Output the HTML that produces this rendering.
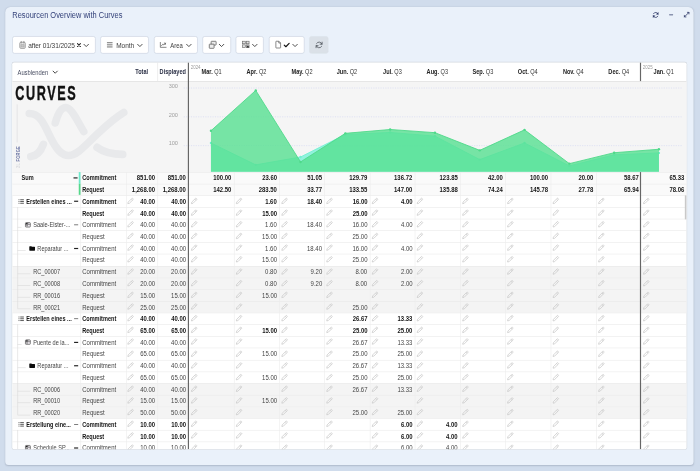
<!DOCTYPE html><html><head><meta charset="utf-8"><title>Resourcen Overview with Curves</title><style>
*{box-sizing:border-box;margin:0;padding:0}
html,body{width:700px;height:471px;overflow:hidden;background:#d0dcec}
body{font-family:"Liberation Sans",sans-serif;color:#222}
#root{position:absolute;left:0;top:0;width:1200px;height:808px;transform:scale(.583333);transform-origin:0 0;filter:blur(.45px)}
.abs{position:absolute}
.panel{position:absolute;background:#eaf1fa;border-radius:9px 9px 6px 6px;box-shadow:0 1.5px 2.5px rgba(60,70,90,.22)}
.title{position:absolute;font-size:14.6px;color:#34427a;white-space:nowrap;line-height:16px;transform:scaleX(.875);transform-origin:0 0}
.btn{position:absolute;background:#fff;border:1px solid #c6cfdc;border-radius:4px}
.btn.grey{background:#dbe1e8;border-color:#dbe1e8}
.bt{position:absolute;font-size:11.2px;letter-spacing:-.1px;color:#3c3c3c;white-space:nowrap;line-height:14px}
.grid{position:absolute;background:#fff;border-radius:3px;overflow:hidden;box-shadow:0 0 0 1px #d3d8df}
.hl{position:absolute;left:0;right:0;height:1px;background:#e9e9e9}
.vl{position:absolute;width:1px;background:#ececec}
.t{position:absolute;font-size:12px;line-height:14px;white-space:nowrap;color:#333;transform:scaleX(.83);transform-origin:0 0}
.t.n{transform:scaleX(.855)}
.t.rr{transform-origin:100% 0}
.t.nm{transform:scaleX(.8)}
.t.ty{transform:scaleX(.855)}
.t.b.ty{transform:scaleX(.795)}
.b{font-weight:700;color:#151515}
.t.b{transform:scaleX(.795)}
.t.b.n{transform:scaleX(.85)}
.r{text-align:right}
.hd{position:absolute;font-size:12px;line-height:14px;transform:scaleX(.8);white-space:nowrap;color:#333;text-align:center}
.hd b{font-weight:700;color:#222}
.yr{position:absolute;font-size:8.4px;line-height:8px;color:#9a9a9a;transform:scaleX(.9);transform-origin:0 0}
.row{position:absolute;left:0;right:0}
svg{position:absolute;overflow:visible}
</style></head><body><div id="root">
<div class="panel" style="left:8.57px;top:11.83px;width:1180.80px;height:784.97px"></div>
<div class="title" style="left:21.43px;top:17.57px">Resourcen Overview with Curves</div>
<svg style="left:1117.71px;top:19.54px" width="12.00" height="11.31" viewBox="0 0 16 15" fill="none" stroke="#2b3665" stroke-width="1.7" stroke-linecap="round" stroke-linejoin="round"><path d="M13.4 5.8A5.7 5.7 0 0 0 3 4.6M2.6 9.2A5.7 5.7 0 0 0 13 10.4"/><path d="M13.8 1.6v4.2h-4.2M2.2 13.4V9.2h4.2" fill="#2b3665" stroke-width="1"/></svg>
<div class="abs" style="left:1146.51px;top:24.51px;width:7.37px;height:1.46px;background:#2b3665;border-radius:1px"></div>
<svg style="left:1171.89px;top:20.23px" width="10.29" height="10.29" viewBox="0 0 12 12" fill="none" stroke="#2b3665" stroke-width="1.6" stroke-linecap="round" stroke-linejoin="round"><path d="M1.6 10.4L10.4 1.6"/><path d="M7.4 1.4h3.2v3.2M4.6 10.6H1.4V7.4" stroke-width="1.5"/></svg>
<div class="btn " style="left:21.43px;top:62.40px;width:142.11px;height:29.49px"></div>
<svg style="left:32.91px;top:70.29px" width="11.31" height="14.06" viewBox="0 0 14 17" fill="none" stroke="#808080" stroke-width="1.5" stroke-linejoin="round"><rect x="1.2" y="2.8" width="11.6" height="13" rx="2.2" fill="#ececec"/><path d="M4.2 .9v3.6M9.8 .9v3.6" stroke-linecap="round"/><rect x="3.6" y="7.4" width="6.8" height="5.6" fill="#c6c6c6" stroke="#9a9a9a" stroke-width="1"/></svg>
<div class="bt" style="left:48.34px;top:70.54px">after 01/31/2025</div>
<svg style="left:132.00px;top:73.89px" width="6.69" height="6.69" viewBox="0 0 8 8" fill="none" stroke="#1a1a1a" stroke-width="2.1" stroke-linecap="round"><path d="M1 1l6 6M7 1L1 7"/></svg>
<svg style="left:143.31px;top:75.09px" width="9.60" height="5.83" viewBox="0 0 10 6" fill="none" stroke="#3a3a3a" stroke-width="1.6" stroke-linecap="round" stroke-linejoin="round"><path d="M1 1l4 4 4-4"/></svg>
<div class="btn " style="left:172.46px;top:62.40px;width:82.29px;height:29.49px"></div>
<svg style="left:183.09px;top:72.34px" width="10.29" height="9.60" viewBox="0 0 12 11" fill="none" stroke="#6a6a6a" stroke-width="1.9"><path d="M.4 1.4h11.2M.4 5.6h11.2M.4 9.8h11.2"/></svg>
<div class="bt" style="left:199.20px;top:70.54px">Month</div>
<svg style="left:235.20px;top:75.09px" width="9.60" height="5.83" viewBox="0 0 10 6" fill="none" stroke="#3a3a3a" stroke-width="1.6" stroke-linecap="round" stroke-linejoin="round"><path d="M1 1l4 4 4-4"/></svg>
<div class="btn " style="left:263.66px;top:62.40px;width:74.91px;height:29.49px"></div>
<svg style="left:274.29px;top:72.00px" width="11.31" height="9.94" viewBox="0 0 13 11.5" fill="none" stroke="#555" stroke-width="1.4" stroke-linecap="round" stroke-linejoin="round"><path d="M1 .8v9.8h11.4"/><path d="M3.4 7.2l2.6-3 2 1.8 3-3.6"/><path d="M8.8 2.2h2.4v2.4"/></svg>
<div class="bt" style="left:292.11px;top:70.54px;transform:scaleX(0.91);transform-origin:0 0">Area</div>
<svg style="left:319.20px;top:75.09px" width="9.60" height="5.83" viewBox="0 0 10 6" fill="none" stroke="#3a3a3a" stroke-width="1.6" stroke-linecap="round" stroke-linejoin="round"><path d="M1 1l4 4 4-4"/></svg>
<div class="btn " style="left:346.97px;top:62.40px;width:48.69px;height:29.49px"></div>
<svg style="left:357.77px;top:69.94px" width="13.37" height="13.71" viewBox="0 0 15.6 16" fill="#ececec" stroke="#5a5a5a" stroke-width="1.5" stroke-linejoin="round"><rect x="4.6" y=".9" width="10" height="7.6" rx="1"/><rect x=".9" y="6.6" width="9.6" height="8.4" rx="1"/></svg>
<svg style="left:375.26px;top:75.09px" width="9.60" height="5.83" viewBox="0 0 10 6" fill="none" stroke="#3a3a3a" stroke-width="1.6" stroke-linecap="round" stroke-linejoin="round"><path d="M1 1l4 4 4-4"/></svg>
<div class="btn " style="left:404.23px;top:62.40px;width:48.00px;height:29.49px"></div>
<svg style="left:414.86px;top:70.46px" width="13.03" height="12.00" viewBox="0 0 15.2 14" fill="#e2e2e2" stroke="#6a6a6a" stroke-width="1.3"><rect x=".8" y=".8" width="5.6" height="5"/><rect x="8.4" y=".8" width="5.6" height="5"/><rect x=".8" y="8" width="5.6" height="5"/><rect x="8.4" y="8" width="5.6" height="5"/><path d="M8.6 13.4l3-4.6 3 4.6z" fill="#222" stroke="none"/></svg>
<svg style="left:432.34px;top:75.09px" width="9.60" height="5.83" viewBox="0 0 10 6" fill="none" stroke="#3a3a3a" stroke-width="1.6" stroke-linecap="round" stroke-linejoin="round"><path d="M1 1l4 4 4-4"/></svg>
<div class="btn " style="left:460.80px;top:62.40px;width:61.03px;height:29.49px"></div>
<svg style="left:471.77px;top:70.29px" width="9.94" height="13.03" viewBox="0 0 11 14.4" fill="none" stroke="#555" stroke-width="1.3" stroke-linejoin="round"><path d="M1 1.6a.8.8 0 0 1 .8-.8h5L10 4v8.8a.8.8 0 0 1-.8.8H1.8a.8.8 0 0 1-.8-.8z"/><path d="M6.6 1v3.2H10"/></svg>
<svg style="left:486.00px;top:73.03px" width="10.97" height="8.23" viewBox="0 0 12 9" fill="none" stroke="#111" stroke-width="2.2" stroke-linecap="round" stroke-linejoin="round"><path d="M1.4 4.8l3 3 6.2-6.4"/></svg>
<svg style="left:501.43px;top:75.09px" width="9.60" height="5.83" viewBox="0 0 10 6" fill="none" stroke="#3a3a3a" stroke-width="1.6" stroke-linecap="round" stroke-linejoin="round"><path d="M1 1l4 4 4-4"/></svg>
<div class="btn grey" style="left:529.71px;top:62.40px;width:33.60px;height:29.49px"></div>
<svg style="left:539.66px;top:70.29px" width="14.06" height="14.06" viewBox="0 0 16 16" fill="none" stroke="#4a5058" stroke-width="1.5" stroke-linecap="round" stroke-linejoin="round"><path d="M13.6 6.6A5.9 5.9 0 0 0 3 5.2M2.4 9.4A5.9 5.9 0 0 0 13 10.8"/><path d="M13.9 2.6v4h-4M2.1 13.4v-4h4"/></svg>
<div class="grid" style="left:21.43px;top:106.97px;width:1155.43px;height:663.09px">
<div class="abs" style="left:0;right:0;top:32.06px;height:155.49px;background:#f5f5f5"></div>
<div class="hl" style="top:32.06px;background:#dcdcdc"></div>
<div class="t" style="left:8.40px;top:10.01px;color:#4a4f63">Ausblenden</div>
<svg style="left:68.74px;top:14.40px" width="9.26" height="5.49" viewBox="0 0 10 6" fill="none" stroke="#333" stroke-width="1.7" stroke-linecap="round" stroke-linejoin="round"><path d="M1 1l4 4 4-4"/></svg>
<div class="t b rr" style="right:922.97px;top:9.33px;color:#2a2f45">Total</div>
<div class="t b rr" style="right:857.66px;top:9.33px;color:#2a2f45">Displayed</div>
<div class="vl" style="left:248.23px;top:0;height:32.06px;background:#e2e2e2"></div>
<div class="hd" style="left:302.40px;width:77.52px;top:9.33px"><b>Mar.</b> Q1</div>
<div class="hd" style="left:379.92px;width:77.52px;top:9.33px"><b>Apr.</b> Q2</div>
<div class="hd" style="left:457.44px;width:77.52px;top:9.33px"><b>May.</b> Q2</div>
<div class="hd" style="left:534.96px;width:77.52px;top:9.33px"><b>Jun.</b> Q2</div>
<div class="hd" style="left:612.48px;width:77.52px;top:9.33px"><b>Jul.</b> Q3</div>
<div class="hd" style="left:690.00px;width:77.52px;top:9.33px"><b>Aug.</b> Q3</div>
<div class="hd" style="left:767.52px;width:77.52px;top:9.33px"><b>Sep.</b> Q3</div>
<div class="hd" style="left:845.04px;width:77.52px;top:9.33px"><b>Oct.</b> Q4</div>
<div class="hd" style="left:922.56px;width:77.52px;top:9.33px"><b>Nov.</b> Q4</div>
<div class="hd" style="left:1000.08px;width:77.52px;top:9.33px"><b>Dec.</b> Q4</div>
<div class="hd" style="left:1077.60px;width:77.52px;top:9.33px"><b>Jan.</b> Q1</div>
<div class="yr" style="left:306.00px;top:4.11px">2024</div>
<div class="yr" style="left:1080.86px;top:4.11px">2025</div>
<div class="abs" style="left:4.63px;top:34.29px;font-size:34.8px;line-height:36px;font-weight:700;color:#111;-webkit-text-stroke:.7px #111;letter-spacing:4.4px;transform:scaleX(.625);transform-origin:0 0;white-space:nowrap">CURVES</div>
<svg style="left:0.00px;top:32.06px" width="240.00px" height="154.97px" viewBox="12.5 81.1 140 90.4" fill="none" stroke="#e8e9eb" stroke-width="7.6" stroke-linecap="round"><path d="M29.5 113.5 C41 113.5 45 126 51 138 C57 150 62 155.5 69 155.5 C77 155.5 85 146 97 134.5 C107 125 115 118 124 112.5"/><path d="M55.5 123 C58 114 61 107.5 66 107.5 C72 107.5 78 122 84 131.5"/><path d="M31 156.6 C36.5 156 41 151.5 43.6 144.4"/><path d="M97.3 147.4 C103 151.6 111 154.4 123 154.4"/><path d="M17.4 104.5V142.5" stroke-width=".7" stroke="#dcdde0" stroke-linecap="butt"/></svg>
<div class="abs" style="left:4.29px;top:169.54px;font-size:10.6px;line-height:8px;font-weight:700;color:#6670a0;letter-spacing:.6px;transform:rotate(-90deg) scaleX(.66);transform-origin:0 0;white-space:nowrap">FORGE</div>
<div class="abs" style="left:4.29px;top:181.03px;font-size:10.6px;line-height:8px;font-weight:700;color:#d8dade;letter-spacing:.3px;transform:rotate(-90deg) scaleX(.66);transform-origin:0 0;white-space:nowrap">2L</div>
<svg style="left:0;top:0" width="1155.43px" height="663.09px" viewBox="12.5 62.4 674.0 386.8">
<line x1="184" x2="682.5" y1="88.0" y2="88.0" stroke="#d2d7f3" stroke-width=".65" stroke-dasharray="1.1 1.3"/>
<text x="178.2" y="88.1" text-anchor="end" font-size="5.6" fill="#a0a0a0" font-family="Liberation Sans, sans-serif">300</text>
<line x1="184" x2="682.5" y1="116.8" y2="116.8" stroke="#d2d7f3" stroke-width=".65" stroke-dasharray="1.1 1.3"/>
<text x="178.2" y="116.8" text-anchor="end" font-size="5.6" fill="#a0a0a0" font-family="Liberation Sans, sans-serif">200</text>
<line x1="184" x2="682.5" y1="145.6" y2="145.6" stroke="#d2d7f3" stroke-width=".65" stroke-dasharray="1.1 1.3"/>
<text x="178.2" y="145.15" text-anchor="end" font-size="5.6" fill="#a0a0a0" font-family="Liberation Sans, sans-serif">100</text>
<polygon points="211.20,171.80 211.20,142.95 256.00,164.84 300.80,156.97 345.60,134.42 390.40,132.43 435.20,136.12 480.00,159.57 524.80,142.95 569.60,165.87 614.40,154.79 659.20,152.88 659.20,171.80" fill="#6ff0d4" fill-opacity=".75"/>
<polyline points="211.20,142.95 256.00,164.84 300.80,156.97 345.60,134.42 390.40,132.43 435.20,136.12 480.00,159.57 524.80,142.95 569.60,165.87 614.40,154.79 659.20,152.88" fill="none" stroke="#74f0d2" stroke-width=".9"/>
<circle cx="211.20" cy="142.95" r="1.2" fill="#74f0d2"/>
<circle cx="256.00" cy="164.84" r="1.2" fill="#74f0d2"/>
<circle cx="300.80" cy="156.97" r="1.2" fill="#74f0d2"/>
<circle cx="345.60" cy="134.42" r="1.2" fill="#74f0d2"/>
<circle cx="390.40" cy="132.43" r="1.2" fill="#74f0d2"/>
<circle cx="435.20" cy="136.12" r="1.2" fill="#74f0d2"/>
<circle cx="480.00" cy="159.57" r="1.2" fill="#74f0d2"/>
<circle cx="524.80" cy="142.95" r="1.2" fill="#74f0d2"/>
<circle cx="569.60" cy="165.87" r="1.2" fill="#74f0d2"/>
<circle cx="614.40" cy="154.79" r="1.2" fill="#74f0d2"/>
<circle cx="659.20" cy="152.88" r="1.2" fill="#74f0d2"/>
<polygon points="211.20,171.80 211.20,130.77 256.00,90.38 300.80,161.92 345.60,133.34 390.40,129.48 435.20,132.67 480.00,150.33 524.80,129.83 569.60,163.64 614.40,152.71 659.20,149.24 659.20,171.80" fill="#56e091" fill-opacity=".8"/>
<polyline points="211.20,130.77 256.00,90.38 300.80,161.92 345.60,133.34 390.40,129.48 435.20,132.67 480.00,150.33 524.80,129.83 569.60,163.64 614.40,152.71 659.20,149.24" fill="none" stroke="#4fd98a" stroke-width=".9" stroke-linejoin="round"/>
<circle cx="211.20" cy="130.77" r="1.2" fill="#4fd98a"/>
<circle cx="256.00" cy="90.38" r="1.2" fill="#4fd98a"/>
<circle cx="300.80" cy="161.92" r="1.2" fill="#4fd98a"/>
<circle cx="345.60" cy="133.34" r="1.2" fill="#4fd98a"/>
<circle cx="390.40" cy="129.48" r="1.2" fill="#4fd98a"/>
<circle cx="435.20" cy="132.67" r="1.2" fill="#4fd98a"/>
<circle cx="480.00" cy="150.33" r="1.2" fill="#4fd98a"/>
<circle cx="524.80" cy="129.83" r="1.2" fill="#4fd98a"/>
<circle cx="569.60" cy="163.64" r="1.2" fill="#4fd98a"/>
<circle cx="614.40" cy="152.71" r="1.2" fill="#4fd98a"/>
<circle cx="659.20" cy="149.24" r="1.2" fill="#4fd98a"/>
</svg>
<div class="abs" style="left:0;right:0;top:187.54px;height:20.21px;background:#fafafa"></div>
<div class="abs" style="left:0;right:0;top:207.67px;height:20.21px;background:#fafafa"></div>
<div class="abs" style="left:0;right:0;top:348.58px;height:20.21px;background:#f4f4f4"></div>
<div class="abs" style="left:0;right:0;top:368.71px;height:20.21px;background:#f4f4f4"></div>
<div class="abs" style="left:0;right:0;top:388.83px;height:20.21px;background:#f4f4f4"></div>
<div class="abs" style="left:0;right:0;top:408.96px;height:20.21px;background:#f4f4f4"></div>
<div class="abs" style="left:0;right:0;top:549.87px;height:20.21px;background:#f4f4f4"></div>
<div class="abs" style="left:0;right:0;top:570.00px;height:20.21px;background:#f4f4f4"></div>
<div class="abs" style="left:0;right:0;top:590.13px;height:20.21px;background:#f4f4f4"></div>
<div class="hl" style="top:187.54px"></div>
<div class="hl" style="top:207.67px"></div>
<div class="hl" style="top:227.80px"></div>
<div class="hl" style="top:247.93px"></div>
<div class="hl" style="top:268.06px"></div>
<div class="hl" style="top:288.19px"></div>
<div class="hl" style="top:308.32px"></div>
<div class="hl" style="top:328.45px"></div>
<div class="hl" style="top:348.58px"></div>
<div class="hl" style="top:368.71px"></div>
<div class="hl" style="top:388.83px"></div>
<div class="hl" style="top:408.96px"></div>
<div class="hl" style="top:429.09px"></div>
<div class="hl" style="top:449.22px"></div>
<div class="hl" style="top:469.35px"></div>
<div class="hl" style="top:489.48px"></div>
<div class="hl" style="top:509.61px"></div>
<div class="hl" style="top:529.74px"></div>
<div class="hl" style="top:549.87px"></div>
<div class="hl" style="top:570.00px"></div>
<div class="hl" style="top:590.13px"></div>
<div class="hl" style="top:610.25px"></div>
<div class="hl" style="top:630.38px"></div>
<div class="hl" style="top:650.51px"></div>
<div class="hl" style="top:670.64px"></div>
<div class="vl" style="left:116.91px;top:187.54px;height:475.54px"></div>
<div class="vl" style="left:194.40px;top:187.54px;height:475.54px"></div>
<div class="vl" style="left:248.23px;top:187.54px;height:475.54px"></div>
<div class="vl" style="left:379.92px;top:187.54px;height:475.54px"></div>
<div class="vl" style="left:457.44px;top:187.54px;height:475.54px"></div>
<div class="vl" style="left:534.96px;top:187.54px;height:475.54px"></div>
<div class="vl" style="left:612.48px;top:187.54px;height:475.54px"></div>
<div class="vl" style="left:690.00px;top:187.54px;height:475.54px"></div>
<div class="vl" style="left:767.52px;top:187.54px;height:475.54px"></div>
<div class="vl" style="left:845.04px;top:187.54px;height:475.54px"></div>
<div class="vl" style="left:922.56px;top:187.54px;height:475.54px"></div>
<div class="vl" style="left:1000.08px;top:187.54px;height:475.54px"></div>
<div class="abs" style="left:8.57px;top:247.93px;width:1px;height:174.53px;background:#d9d9d9"></div>
<div class="abs" style="left:8.57px;top:449.22px;width:1px;height:154.40px;background:#d9d9d9"></div>
<div class="abs" style="left:8.57px;top:630.38px;width:1px;height:32.70px;background:#d9d9d9"></div>
<div class="abs" style="left:8.57px;top:281.55px;width:7.20px;height:1px;background:#d9d9d9"></div>
<div class="abs" style="left:8.57px;top:321.81px;width:13.89px;height:1px;background:#d9d9d9"></div>
<div class="abs" style="left:8.57px;top:362.07px;width:22.46px;height:1px;background:#d9d9d9"></div>
<div class="abs" style="left:8.57px;top:382.20px;width:22.46px;height:1px;background:#d9d9d9"></div>
<div class="abs" style="left:8.57px;top:402.33px;width:22.46px;height:1px;background:#d9d9d9"></div>
<div class="abs" style="left:8.57px;top:422.46px;width:22.46px;height:1px;background:#d9d9d9"></div>
<div class="abs" style="left:8.57px;top:482.84px;width:7.20px;height:1px;background:#d9d9d9"></div>
<div class="abs" style="left:8.57px;top:523.10px;width:13.89px;height:1px;background:#d9d9d9"></div>
<div class="abs" style="left:8.57px;top:563.36px;width:22.46px;height:1px;background:#d9d9d9"></div>
<div class="abs" style="left:8.57px;top:583.49px;width:22.46px;height:1px;background:#d9d9d9"></div>
<div class="abs" style="left:8.57px;top:603.62px;width:22.46px;height:1px;background:#d9d9d9"></div>
<div class="abs" style="left:8.57px;top:664.01px;width:7.20px;height:1px;background:#d9d9d9"></div>
<div class="t b" style="top:191.25px;left:15.60px;">Sum</div>
<div class="abs" style="left:104.40px;top:197.26px;width:7.54px;height:1.54px;background:#222"></div>
<div class="abs" style="left:114.00px;top:188.23px;width:2.91px;height:19.44px;background:#6eeacb"></div>
<div class="t ty b" style="top:191.25px;left:120.00px;">Commitment</div>
<div class="t b n rr" style="top:191.25px;right:910.97px;">851.00</div>
<div class="t b n rr" style="top:191.25px;right:857.66px;">851.00</div>
<div class="t b n rr" style="top:191.25px;right:779.79px;">100.00</div>
<div class="t b n rr" style="top:191.25px;right:702.27px;">23.60</div>
<div class="t b n rr" style="top:191.25px;right:624.75px;">51.05</div>
<div class="t b n rr" style="top:191.25px;right:547.23px;">129.79</div>
<div class="t b n rr" style="top:191.25px;right:469.71px;">136.72</div>
<div class="t b n rr" style="top:191.25px;right:392.19px;">123.85</div>
<div class="t b n rr" style="top:191.25px;right:314.67px;">42.00</div>
<div class="t b n rr" style="top:191.25px;right:237.15px;">100.00</div>
<div class="t b n rr" style="top:191.25px;right:159.63px;">20.00</div>
<div class="t b n rr" style="top:191.25px;right:82.11px;">58.67</div>
<div class="t b n rr" style="top:191.25px;right:3.91px;">65.33</div>
<div class="abs" style="left:114.00px;top:207.67px;width:2.91px;height:19.79px;background:#55d88a"></div>
<div class="t ty b" style="top:211.38px;left:120.00px;">Request</div>
<div class="t b n rr" style="top:211.38px;right:910.97px;">1,268.00</div>
<div class="t b n rr" style="top:211.38px;right:857.66px;">1,268.00</div>
<div class="t b n rr" style="top:211.38px;right:779.79px;">142.50</div>
<div class="t b n rr" style="top:211.38px;right:702.27px;">283.50</div>
<div class="t b n rr" style="top:211.38px;right:624.75px;">33.77</div>
<div class="t b n rr" style="top:211.38px;right:547.23px;">133.55</div>
<div class="t b n rr" style="top:211.38px;right:469.71px;">147.00</div>
<div class="t b n rr" style="top:211.38px;right:392.19px;">135.88</div>
<div class="t b n rr" style="top:211.38px;right:314.67px;">74.24</div>
<div class="t b n rr" style="top:211.38px;right:237.15px;">145.78</div>
<div class="t b n rr" style="top:211.38px;right:159.63px;">27.78</div>
<div class="t b n rr" style="top:211.38px;right:82.11px;">65.94</div>
<div class="t b n rr" style="top:211.38px;right:3.91px;">78.06</div>
<svg style="left:9.60px;top:233.58px" width="10.11" height="8.91" viewBox="0 0 12 10" fill="none" stroke="#222" stroke-width="1.5"><path d="M4.4 1.4h7.4M4.4 5h7.4M4.4 8.6h7.4"/><path d="M.4 1.4h2.6M.4 5h2.6M.4 8.6h2.6" stroke="#444" stroke-dasharray="1.1 .4"/></svg>
<div class="t b" style="top:231.51px;left:23.31px;">Erstellen eines ...</div>
<div class="abs" style="left:105.26px;top:237.52px;width:7.54px;height:1.54px;background:#222"></div>
<div class="t ty b" style="top:231.51px;left:120.00px;">Commitment</div>
<svg style="left:196.29px;top:231.87px" width="11.31" height="11.31" viewBox="0 0 12 12" fill="none" stroke="#c9c9c9" stroke-width="1.35" stroke-linejoin="round"><path d="M1.2 10.8l.7-2.9L8.6 1.2a1.1 1.1 0 0 1 1.6 0l.6.6a1.1 1.1 0 0 1 0 1.6L4.1 10.1z M7.4 2.4l2.2 2.2" /></svg>
<div class="t b n rr" style="top:231.51px;right:910.97px;">40.00</div>
<div class="t b n rr" style="top:231.51px;right:857.66px;">40.00</div>
<svg style="left:305.40px;top:231.87px" width="11.31" height="11.31" viewBox="0 0 12 12" fill="none" stroke="#c9c9c9" stroke-width="1.35" stroke-linejoin="round"><path d="M1.2 10.8l.7-2.9L8.6 1.2a1.1 1.1 0 0 1 1.6 0l.6.6a1.1 1.1 0 0 1 0 1.6L4.1 10.1z M7.4 2.4l2.2 2.2" /></svg>
<svg style="left:382.92px;top:231.87px" width="11.31" height="11.31" viewBox="0 0 12 12" fill="none" stroke="#c9c9c9" stroke-width="1.35" stroke-linejoin="round"><path d="M1.2 10.8l.7-2.9L8.6 1.2a1.1 1.1 0 0 1 1.6 0l.6.6a1.1 1.1 0 0 1 0 1.6L4.1 10.1z M7.4 2.4l2.2 2.2" /></svg>
<div class="t b n rr" style="top:231.51px;right:702.27px;">1.60</div>
<svg style="left:460.44px;top:231.87px" width="11.31" height="11.31" viewBox="0 0 12 12" fill="none" stroke="#c9c9c9" stroke-width="1.35" stroke-linejoin="round"><path d="M1.2 10.8l.7-2.9L8.6 1.2a1.1 1.1 0 0 1 1.6 0l.6.6a1.1 1.1 0 0 1 0 1.6L4.1 10.1z M7.4 2.4l2.2 2.2" /></svg>
<div class="t b n rr" style="top:231.51px;right:624.75px;">18.40</div>
<svg style="left:537.96px;top:231.87px" width="11.31" height="11.31" viewBox="0 0 12 12" fill="none" stroke="#c9c9c9" stroke-width="1.35" stroke-linejoin="round"><path d="M1.2 10.8l.7-2.9L8.6 1.2a1.1 1.1 0 0 1 1.6 0l.6.6a1.1 1.1 0 0 1 0 1.6L4.1 10.1z M7.4 2.4l2.2 2.2" /></svg>
<div class="t b n rr" style="top:231.51px;right:547.23px;">16.00</div>
<svg style="left:615.48px;top:231.87px" width="11.31" height="11.31" viewBox="0 0 12 12" fill="none" stroke="#c9c9c9" stroke-width="1.35" stroke-linejoin="round"><path d="M1.2 10.8l.7-2.9L8.6 1.2a1.1 1.1 0 0 1 1.6 0l.6.6a1.1 1.1 0 0 1 0 1.6L4.1 10.1z M7.4 2.4l2.2 2.2" /></svg>
<div class="t b n rr" style="top:231.51px;right:469.71px;">4.00</div>
<svg style="left:693.00px;top:231.87px" width="11.31" height="11.31" viewBox="0 0 12 12" fill="none" stroke="#c9c9c9" stroke-width="1.35" stroke-linejoin="round"><path d="M1.2 10.8l.7-2.9L8.6 1.2a1.1 1.1 0 0 1 1.6 0l.6.6a1.1 1.1 0 0 1 0 1.6L4.1 10.1z M7.4 2.4l2.2 2.2" /></svg>
<svg style="left:770.52px;top:231.87px" width="11.31" height="11.31" viewBox="0 0 12 12" fill="none" stroke="#c9c9c9" stroke-width="1.35" stroke-linejoin="round"><path d="M1.2 10.8l.7-2.9L8.6 1.2a1.1 1.1 0 0 1 1.6 0l.6.6a1.1 1.1 0 0 1 0 1.6L4.1 10.1z M7.4 2.4l2.2 2.2" /></svg>
<svg style="left:848.04px;top:231.87px" width="11.31" height="11.31" viewBox="0 0 12 12" fill="none" stroke="#c9c9c9" stroke-width="1.35" stroke-linejoin="round"><path d="M1.2 10.8l.7-2.9L8.6 1.2a1.1 1.1 0 0 1 1.6 0l.6.6a1.1 1.1 0 0 1 0 1.6L4.1 10.1z M7.4 2.4l2.2 2.2" /></svg>
<svg style="left:925.56px;top:231.87px" width="11.31" height="11.31" viewBox="0 0 12 12" fill="none" stroke="#c9c9c9" stroke-width="1.35" stroke-linejoin="round"><path d="M1.2 10.8l.7-2.9L8.6 1.2a1.1 1.1 0 0 1 1.6 0l.6.6a1.1 1.1 0 0 1 0 1.6L4.1 10.1z M7.4 2.4l2.2 2.2" /></svg>
<svg style="left:1003.08px;top:231.87px" width="11.31" height="11.31" viewBox="0 0 12 12" fill="none" stroke="#c9c9c9" stroke-width="1.35" stroke-linejoin="round"><path d="M1.2 10.8l.7-2.9L8.6 1.2a1.1 1.1 0 0 1 1.6 0l.6.6a1.1 1.1 0 0 1 0 1.6L4.1 10.1z M7.4 2.4l2.2 2.2" /></svg>
<svg style="left:1080.60px;top:231.87px" width="11.31" height="11.31" viewBox="0 0 12 12" fill="none" stroke="#c9c9c9" stroke-width="1.35" stroke-linejoin="round"><path d="M1.2 10.8l.7-2.9L8.6 1.2a1.1 1.1 0 0 1 1.6 0l.6.6a1.1 1.1 0 0 1 0 1.6L4.1 10.1z M7.4 2.4l2.2 2.2" /></svg>
<div class="t ty b" style="top:251.63px;left:120.00px;">Request</div>
<svg style="left:196.29px;top:251.99px" width="11.31" height="11.31" viewBox="0 0 12 12" fill="none" stroke="#c9c9c9" stroke-width="1.35" stroke-linejoin="round"><path d="M1.2 10.8l.7-2.9L8.6 1.2a1.1 1.1 0 0 1 1.6 0l.6.6a1.1 1.1 0 0 1 0 1.6L4.1 10.1z M7.4 2.4l2.2 2.2" /></svg>
<div class="t b n rr" style="top:251.63px;right:910.97px;">40.00</div>
<div class="t b n rr" style="top:251.63px;right:857.66px;">40.00</div>
<svg style="left:305.40px;top:251.99px" width="11.31" height="11.31" viewBox="0 0 12 12" fill="none" stroke="#c9c9c9" stroke-width="1.35" stroke-linejoin="round"><path d="M1.2 10.8l.7-2.9L8.6 1.2a1.1 1.1 0 0 1 1.6 0l.6.6a1.1 1.1 0 0 1 0 1.6L4.1 10.1z M7.4 2.4l2.2 2.2" /></svg>
<svg style="left:382.92px;top:251.99px" width="11.31" height="11.31" viewBox="0 0 12 12" fill="none" stroke="#c9c9c9" stroke-width="1.35" stroke-linejoin="round"><path d="M1.2 10.8l.7-2.9L8.6 1.2a1.1 1.1 0 0 1 1.6 0l.6.6a1.1 1.1 0 0 1 0 1.6L4.1 10.1z M7.4 2.4l2.2 2.2" /></svg>
<div class="t b n rr" style="top:251.63px;right:702.27px;">15.00</div>
<svg style="left:460.44px;top:251.99px" width="11.31" height="11.31" viewBox="0 0 12 12" fill="none" stroke="#c9c9c9" stroke-width="1.35" stroke-linejoin="round"><path d="M1.2 10.8l.7-2.9L8.6 1.2a1.1 1.1 0 0 1 1.6 0l.6.6a1.1 1.1 0 0 1 0 1.6L4.1 10.1z M7.4 2.4l2.2 2.2" /></svg>
<svg style="left:537.96px;top:251.99px" width="11.31" height="11.31" viewBox="0 0 12 12" fill="none" stroke="#c9c9c9" stroke-width="1.35" stroke-linejoin="round"><path d="M1.2 10.8l.7-2.9L8.6 1.2a1.1 1.1 0 0 1 1.6 0l.6.6a1.1 1.1 0 0 1 0 1.6L4.1 10.1z M7.4 2.4l2.2 2.2" /></svg>
<div class="t b n rr" style="top:251.63px;right:547.23px;">25.00</div>
<svg style="left:615.48px;top:251.99px" width="11.31" height="11.31" viewBox="0 0 12 12" fill="none" stroke="#c9c9c9" stroke-width="1.35" stroke-linejoin="round"><path d="M1.2 10.8l.7-2.9L8.6 1.2a1.1 1.1 0 0 1 1.6 0l.6.6a1.1 1.1 0 0 1 0 1.6L4.1 10.1z M7.4 2.4l2.2 2.2" /></svg>
<svg style="left:693.00px;top:251.99px" width="11.31" height="11.31" viewBox="0 0 12 12" fill="none" stroke="#c9c9c9" stroke-width="1.35" stroke-linejoin="round"><path d="M1.2 10.8l.7-2.9L8.6 1.2a1.1 1.1 0 0 1 1.6 0l.6.6a1.1 1.1 0 0 1 0 1.6L4.1 10.1z M7.4 2.4l2.2 2.2" /></svg>
<svg style="left:770.52px;top:251.99px" width="11.31" height="11.31" viewBox="0 0 12 12" fill="none" stroke="#c9c9c9" stroke-width="1.35" stroke-linejoin="round"><path d="M1.2 10.8l.7-2.9L8.6 1.2a1.1 1.1 0 0 1 1.6 0l.6.6a1.1 1.1 0 0 1 0 1.6L4.1 10.1z M7.4 2.4l2.2 2.2" /></svg>
<svg style="left:848.04px;top:251.99px" width="11.31" height="11.31" viewBox="0 0 12 12" fill="none" stroke="#c9c9c9" stroke-width="1.35" stroke-linejoin="round"><path d="M1.2 10.8l.7-2.9L8.6 1.2a1.1 1.1 0 0 1 1.6 0l.6.6a1.1 1.1 0 0 1 0 1.6L4.1 10.1z M7.4 2.4l2.2 2.2" /></svg>
<svg style="left:925.56px;top:251.99px" width="11.31" height="11.31" viewBox="0 0 12 12" fill="none" stroke="#c9c9c9" stroke-width="1.35" stroke-linejoin="round"><path d="M1.2 10.8l.7-2.9L8.6 1.2a1.1 1.1 0 0 1 1.6 0l.6.6a1.1 1.1 0 0 1 0 1.6L4.1 10.1z M7.4 2.4l2.2 2.2" /></svg>
<svg style="left:1003.08px;top:251.99px" width="11.31" height="11.31" viewBox="0 0 12 12" fill="none" stroke="#c9c9c9" stroke-width="1.35" stroke-linejoin="round"><path d="M1.2 10.8l.7-2.9L8.6 1.2a1.1 1.1 0 0 1 1.6 0l.6.6a1.1 1.1 0 0 1 0 1.6L4.1 10.1z M7.4 2.4l2.2 2.2" /></svg>
<svg style="left:1080.60px;top:251.99px" width="11.31" height="11.31" viewBox="0 0 12 12" fill="none" stroke="#c9c9c9" stroke-width="1.35" stroke-linejoin="round"><path d="M1.2 10.8l.7-2.9L8.6 1.2a1.1 1.1 0 0 1 1.6 0l.6.6a1.1 1.1 0 0 1 0 1.6L4.1 10.1z M7.4 2.4l2.2 2.2" /></svg>
<svg style="left:21.60px;top:273.92px" width="9.60" height="8.91" viewBox="0 0 10.8 10" fill="#ece8ee" stroke="#3a3a3a" stroke-width="1.15"><rect x=".7" y=".7" width="9.4" height="8.6" rx="1.2"/><path d="M.7 4.2h9.4M5.4 .7v3.5" stroke-width=".9"/><rect x="1.6" y="1.6" width="3.2" height="2.2" fill="#222" stroke="none"/><rect x="2.2" y="5.6" width="3.2" height="2.2" fill="#777" stroke="none"/></svg>
<div class="t nm" style="top:271.76px;left:35.14px;color:#444;">Saale-Elster-...</div>
<div class="abs" style="left:105.26px;top:277.78px;width:7.54px;height:1.54px;background:#222"></div>
<div class="t ty" style="top:271.76px;left:120.00px;color:#444;">Commitment</div>
<svg style="left:196.29px;top:272.12px" width="11.31" height="11.31" viewBox="0 0 12 12" fill="none" stroke="#c9c9c9" stroke-width="1.35" stroke-linejoin="round"><path d="M1.2 10.8l.7-2.9L8.6 1.2a1.1 1.1 0 0 1 1.6 0l.6.6a1.1 1.1 0 0 1 0 1.6L4.1 10.1z M7.4 2.4l2.2 2.2" /></svg>
<div class="t n rr" style="top:271.76px;right:910.97px;color:#444;">40.00</div>
<div class="t n rr" style="top:271.76px;right:857.66px;color:#444;">40.00</div>
<svg style="left:305.40px;top:272.12px" width="11.31" height="11.31" viewBox="0 0 12 12" fill="none" stroke="#c9c9c9" stroke-width="1.35" stroke-linejoin="round"><path d="M1.2 10.8l.7-2.9L8.6 1.2a1.1 1.1 0 0 1 1.6 0l.6.6a1.1 1.1 0 0 1 0 1.6L4.1 10.1z M7.4 2.4l2.2 2.2" /></svg>
<svg style="left:382.92px;top:272.12px" width="11.31" height="11.31" viewBox="0 0 12 12" fill="none" stroke="#c9c9c9" stroke-width="1.35" stroke-linejoin="round"><path d="M1.2 10.8l.7-2.9L8.6 1.2a1.1 1.1 0 0 1 1.6 0l.6.6a1.1 1.1 0 0 1 0 1.6L4.1 10.1z M7.4 2.4l2.2 2.2" /></svg>
<div class="t n rr" style="top:271.76px;right:702.27px;color:#444;">1.60</div>
<svg style="left:460.44px;top:272.12px" width="11.31" height="11.31" viewBox="0 0 12 12" fill="none" stroke="#c9c9c9" stroke-width="1.35" stroke-linejoin="round"><path d="M1.2 10.8l.7-2.9L8.6 1.2a1.1 1.1 0 0 1 1.6 0l.6.6a1.1 1.1 0 0 1 0 1.6L4.1 10.1z M7.4 2.4l2.2 2.2" /></svg>
<div class="t n rr" style="top:271.76px;right:624.75px;color:#444;">18.40</div>
<svg style="left:537.96px;top:272.12px" width="11.31" height="11.31" viewBox="0 0 12 12" fill="none" stroke="#c9c9c9" stroke-width="1.35" stroke-linejoin="round"><path d="M1.2 10.8l.7-2.9L8.6 1.2a1.1 1.1 0 0 1 1.6 0l.6.6a1.1 1.1 0 0 1 0 1.6L4.1 10.1z M7.4 2.4l2.2 2.2" /></svg>
<div class="t n rr" style="top:271.76px;right:547.23px;color:#444;">16.00</div>
<svg style="left:615.48px;top:272.12px" width="11.31" height="11.31" viewBox="0 0 12 12" fill="none" stroke="#c9c9c9" stroke-width="1.35" stroke-linejoin="round"><path d="M1.2 10.8l.7-2.9L8.6 1.2a1.1 1.1 0 0 1 1.6 0l.6.6a1.1 1.1 0 0 1 0 1.6L4.1 10.1z M7.4 2.4l2.2 2.2" /></svg>
<div class="t n rr" style="top:271.76px;right:469.71px;color:#444;">4.00</div>
<svg style="left:693.00px;top:272.12px" width="11.31" height="11.31" viewBox="0 0 12 12" fill="none" stroke="#c9c9c9" stroke-width="1.35" stroke-linejoin="round"><path d="M1.2 10.8l.7-2.9L8.6 1.2a1.1 1.1 0 0 1 1.6 0l.6.6a1.1 1.1 0 0 1 0 1.6L4.1 10.1z M7.4 2.4l2.2 2.2" /></svg>
<svg style="left:770.52px;top:272.12px" width="11.31" height="11.31" viewBox="0 0 12 12" fill="none" stroke="#c9c9c9" stroke-width="1.35" stroke-linejoin="round"><path d="M1.2 10.8l.7-2.9L8.6 1.2a1.1 1.1 0 0 1 1.6 0l.6.6a1.1 1.1 0 0 1 0 1.6L4.1 10.1z M7.4 2.4l2.2 2.2" /></svg>
<svg style="left:848.04px;top:272.12px" width="11.31" height="11.31" viewBox="0 0 12 12" fill="none" stroke="#c9c9c9" stroke-width="1.35" stroke-linejoin="round"><path d="M1.2 10.8l.7-2.9L8.6 1.2a1.1 1.1 0 0 1 1.6 0l.6.6a1.1 1.1 0 0 1 0 1.6L4.1 10.1z M7.4 2.4l2.2 2.2" /></svg>
<svg style="left:925.56px;top:272.12px" width="11.31" height="11.31" viewBox="0 0 12 12" fill="none" stroke="#c9c9c9" stroke-width="1.35" stroke-linejoin="round"><path d="M1.2 10.8l.7-2.9L8.6 1.2a1.1 1.1 0 0 1 1.6 0l.6.6a1.1 1.1 0 0 1 0 1.6L4.1 10.1z M7.4 2.4l2.2 2.2" /></svg>
<svg style="left:1003.08px;top:272.12px" width="11.31" height="11.31" viewBox="0 0 12 12" fill="none" stroke="#c9c9c9" stroke-width="1.35" stroke-linejoin="round"><path d="M1.2 10.8l.7-2.9L8.6 1.2a1.1 1.1 0 0 1 1.6 0l.6.6a1.1 1.1 0 0 1 0 1.6L4.1 10.1z M7.4 2.4l2.2 2.2" /></svg>
<svg style="left:1080.60px;top:272.12px" width="11.31" height="11.31" viewBox="0 0 12 12" fill="none" stroke="#c9c9c9" stroke-width="1.35" stroke-linejoin="round"><path d="M1.2 10.8l.7-2.9L8.6 1.2a1.1 1.1 0 0 1 1.6 0l.6.6a1.1 1.1 0 0 1 0 1.6L4.1 10.1z M7.4 2.4l2.2 2.2" /></svg>
<div class="t ty" style="top:291.89px;left:120.00px;color:#444;">Request</div>
<svg style="left:196.29px;top:292.25px" width="11.31" height="11.31" viewBox="0 0 12 12" fill="none" stroke="#c9c9c9" stroke-width="1.35" stroke-linejoin="round"><path d="M1.2 10.8l.7-2.9L8.6 1.2a1.1 1.1 0 0 1 1.6 0l.6.6a1.1 1.1 0 0 1 0 1.6L4.1 10.1z M7.4 2.4l2.2 2.2" /></svg>
<div class="t n rr" style="top:291.89px;right:910.97px;color:#444;">40.00</div>
<div class="t n rr" style="top:291.89px;right:857.66px;color:#444;">40.00</div>
<svg style="left:305.40px;top:292.25px" width="11.31" height="11.31" viewBox="0 0 12 12" fill="none" stroke="#c9c9c9" stroke-width="1.35" stroke-linejoin="round"><path d="M1.2 10.8l.7-2.9L8.6 1.2a1.1 1.1 0 0 1 1.6 0l.6.6a1.1 1.1 0 0 1 0 1.6L4.1 10.1z M7.4 2.4l2.2 2.2" /></svg>
<svg style="left:382.92px;top:292.25px" width="11.31" height="11.31" viewBox="0 0 12 12" fill="none" stroke="#c9c9c9" stroke-width="1.35" stroke-linejoin="round"><path d="M1.2 10.8l.7-2.9L8.6 1.2a1.1 1.1 0 0 1 1.6 0l.6.6a1.1 1.1 0 0 1 0 1.6L4.1 10.1z M7.4 2.4l2.2 2.2" /></svg>
<div class="t n rr" style="top:291.89px;right:702.27px;color:#444;">15.00</div>
<svg style="left:460.44px;top:292.25px" width="11.31" height="11.31" viewBox="0 0 12 12" fill="none" stroke="#c9c9c9" stroke-width="1.35" stroke-linejoin="round"><path d="M1.2 10.8l.7-2.9L8.6 1.2a1.1 1.1 0 0 1 1.6 0l.6.6a1.1 1.1 0 0 1 0 1.6L4.1 10.1z M7.4 2.4l2.2 2.2" /></svg>
<svg style="left:537.96px;top:292.25px" width="11.31" height="11.31" viewBox="0 0 12 12" fill="none" stroke="#c9c9c9" stroke-width="1.35" stroke-linejoin="round"><path d="M1.2 10.8l.7-2.9L8.6 1.2a1.1 1.1 0 0 1 1.6 0l.6.6a1.1 1.1 0 0 1 0 1.6L4.1 10.1z M7.4 2.4l2.2 2.2" /></svg>
<div class="t n rr" style="top:291.89px;right:547.23px;color:#444;">25.00</div>
<svg style="left:615.48px;top:292.25px" width="11.31" height="11.31" viewBox="0 0 12 12" fill="none" stroke="#c9c9c9" stroke-width="1.35" stroke-linejoin="round"><path d="M1.2 10.8l.7-2.9L8.6 1.2a1.1 1.1 0 0 1 1.6 0l.6.6a1.1 1.1 0 0 1 0 1.6L4.1 10.1z M7.4 2.4l2.2 2.2" /></svg>
<svg style="left:693.00px;top:292.25px" width="11.31" height="11.31" viewBox="0 0 12 12" fill="none" stroke="#c9c9c9" stroke-width="1.35" stroke-linejoin="round"><path d="M1.2 10.8l.7-2.9L8.6 1.2a1.1 1.1 0 0 1 1.6 0l.6.6a1.1 1.1 0 0 1 0 1.6L4.1 10.1z M7.4 2.4l2.2 2.2" /></svg>
<svg style="left:770.52px;top:292.25px" width="11.31" height="11.31" viewBox="0 0 12 12" fill="none" stroke="#c9c9c9" stroke-width="1.35" stroke-linejoin="round"><path d="M1.2 10.8l.7-2.9L8.6 1.2a1.1 1.1 0 0 1 1.6 0l.6.6a1.1 1.1 0 0 1 0 1.6L4.1 10.1z M7.4 2.4l2.2 2.2" /></svg>
<svg style="left:848.04px;top:292.25px" width="11.31" height="11.31" viewBox="0 0 12 12" fill="none" stroke="#c9c9c9" stroke-width="1.35" stroke-linejoin="round"><path d="M1.2 10.8l.7-2.9L8.6 1.2a1.1 1.1 0 0 1 1.6 0l.6.6a1.1 1.1 0 0 1 0 1.6L4.1 10.1z M7.4 2.4l2.2 2.2" /></svg>
<svg style="left:925.56px;top:292.25px" width="11.31" height="11.31" viewBox="0 0 12 12" fill="none" stroke="#c9c9c9" stroke-width="1.35" stroke-linejoin="round"><path d="M1.2 10.8l.7-2.9L8.6 1.2a1.1 1.1 0 0 1 1.6 0l.6.6a1.1 1.1 0 0 1 0 1.6L4.1 10.1z M7.4 2.4l2.2 2.2" /></svg>
<svg style="left:1003.08px;top:292.25px" width="11.31" height="11.31" viewBox="0 0 12 12" fill="none" stroke="#c9c9c9" stroke-width="1.35" stroke-linejoin="round"><path d="M1.2 10.8l.7-2.9L8.6 1.2a1.1 1.1 0 0 1 1.6 0l.6.6a1.1 1.1 0 0 1 0 1.6L4.1 10.1z M7.4 2.4l2.2 2.2" /></svg>
<svg style="left:1080.60px;top:292.25px" width="11.31" height="11.31" viewBox="0 0 12 12" fill="none" stroke="#c9c9c9" stroke-width="1.35" stroke-linejoin="round"><path d="M1.2 10.8l.7-2.9L8.6 1.2a1.1 1.1 0 0 1 1.6 0l.6.6a1.1 1.1 0 0 1 0 1.6L4.1 10.1z M7.4 2.4l2.2 2.2" /></svg>
<svg style="left:28.63px;top:314.78px" width="10.29" height="7.71" viewBox="0 0 12 9.4" fill="#0c0c0c"><path d="M0 1.2A1.2 1.2 0 0 1 1.2 0h3l1.4 1.4h5.2A1.2 1.2 0 0 1 12 2.6v5.6a1.2 1.2 0 0 1-1.2 1.2H1.2A1.2 1.2 0 0 1 0 8.2z"/></svg>
<div class="t nm" style="top:312.02px;left:43.03px;color:#444;">Reparatur ...</div>
<div class="abs" style="left:105.26px;top:318.04px;width:7.54px;height:1.54px;background:#222"></div>
<div class="t ty" style="top:312.02px;left:120.00px;color:#444;">Commitment</div>
<svg style="left:196.29px;top:312.38px" width="11.31" height="11.31" viewBox="0 0 12 12" fill="none" stroke="#c9c9c9" stroke-width="1.35" stroke-linejoin="round"><path d="M1.2 10.8l.7-2.9L8.6 1.2a1.1 1.1 0 0 1 1.6 0l.6.6a1.1 1.1 0 0 1 0 1.6L4.1 10.1z M7.4 2.4l2.2 2.2" /></svg>
<div class="t n rr" style="top:312.02px;right:910.97px;color:#444;">40.00</div>
<div class="t n rr" style="top:312.02px;right:857.66px;color:#444;">40.00</div>
<svg style="left:305.40px;top:312.38px" width="11.31" height="11.31" viewBox="0 0 12 12" fill="none" stroke="#c9c9c9" stroke-width="1.35" stroke-linejoin="round"><path d="M1.2 10.8l.7-2.9L8.6 1.2a1.1 1.1 0 0 1 1.6 0l.6.6a1.1 1.1 0 0 1 0 1.6L4.1 10.1z M7.4 2.4l2.2 2.2" /></svg>
<svg style="left:382.92px;top:312.38px" width="11.31" height="11.31" viewBox="0 0 12 12" fill="none" stroke="#c9c9c9" stroke-width="1.35" stroke-linejoin="round"><path d="M1.2 10.8l.7-2.9L8.6 1.2a1.1 1.1 0 0 1 1.6 0l.6.6a1.1 1.1 0 0 1 0 1.6L4.1 10.1z M7.4 2.4l2.2 2.2" /></svg>
<div class="t n rr" style="top:312.02px;right:702.27px;color:#444;">1.60</div>
<svg style="left:460.44px;top:312.38px" width="11.31" height="11.31" viewBox="0 0 12 12" fill="none" stroke="#c9c9c9" stroke-width="1.35" stroke-linejoin="round"><path d="M1.2 10.8l.7-2.9L8.6 1.2a1.1 1.1 0 0 1 1.6 0l.6.6a1.1 1.1 0 0 1 0 1.6L4.1 10.1z M7.4 2.4l2.2 2.2" /></svg>
<div class="t n rr" style="top:312.02px;right:624.75px;color:#444;">18.40</div>
<svg style="left:537.96px;top:312.38px" width="11.31" height="11.31" viewBox="0 0 12 12" fill="none" stroke="#c9c9c9" stroke-width="1.35" stroke-linejoin="round"><path d="M1.2 10.8l.7-2.9L8.6 1.2a1.1 1.1 0 0 1 1.6 0l.6.6a1.1 1.1 0 0 1 0 1.6L4.1 10.1z M7.4 2.4l2.2 2.2" /></svg>
<div class="t n rr" style="top:312.02px;right:547.23px;color:#444;">16.00</div>
<svg style="left:615.48px;top:312.38px" width="11.31" height="11.31" viewBox="0 0 12 12" fill="none" stroke="#c9c9c9" stroke-width="1.35" stroke-linejoin="round"><path d="M1.2 10.8l.7-2.9L8.6 1.2a1.1 1.1 0 0 1 1.6 0l.6.6a1.1 1.1 0 0 1 0 1.6L4.1 10.1z M7.4 2.4l2.2 2.2" /></svg>
<div class="t n rr" style="top:312.02px;right:469.71px;color:#444;">4.00</div>
<svg style="left:693.00px;top:312.38px" width="11.31" height="11.31" viewBox="0 0 12 12" fill="none" stroke="#c9c9c9" stroke-width="1.35" stroke-linejoin="round"><path d="M1.2 10.8l.7-2.9L8.6 1.2a1.1 1.1 0 0 1 1.6 0l.6.6a1.1 1.1 0 0 1 0 1.6L4.1 10.1z M7.4 2.4l2.2 2.2" /></svg>
<svg style="left:770.52px;top:312.38px" width="11.31" height="11.31" viewBox="0 0 12 12" fill="none" stroke="#c9c9c9" stroke-width="1.35" stroke-linejoin="round"><path d="M1.2 10.8l.7-2.9L8.6 1.2a1.1 1.1 0 0 1 1.6 0l.6.6a1.1 1.1 0 0 1 0 1.6L4.1 10.1z M7.4 2.4l2.2 2.2" /></svg>
<svg style="left:848.04px;top:312.38px" width="11.31" height="11.31" viewBox="0 0 12 12" fill="none" stroke="#c9c9c9" stroke-width="1.35" stroke-linejoin="round"><path d="M1.2 10.8l.7-2.9L8.6 1.2a1.1 1.1 0 0 1 1.6 0l.6.6a1.1 1.1 0 0 1 0 1.6L4.1 10.1z M7.4 2.4l2.2 2.2" /></svg>
<svg style="left:925.56px;top:312.38px" width="11.31" height="11.31" viewBox="0 0 12 12" fill="none" stroke="#c9c9c9" stroke-width="1.35" stroke-linejoin="round"><path d="M1.2 10.8l.7-2.9L8.6 1.2a1.1 1.1 0 0 1 1.6 0l.6.6a1.1 1.1 0 0 1 0 1.6L4.1 10.1z M7.4 2.4l2.2 2.2" /></svg>
<svg style="left:1003.08px;top:312.38px" width="11.31" height="11.31" viewBox="0 0 12 12" fill="none" stroke="#c9c9c9" stroke-width="1.35" stroke-linejoin="round"><path d="M1.2 10.8l.7-2.9L8.6 1.2a1.1 1.1 0 0 1 1.6 0l.6.6a1.1 1.1 0 0 1 0 1.6L4.1 10.1z M7.4 2.4l2.2 2.2" /></svg>
<svg style="left:1080.60px;top:312.38px" width="11.31" height="11.31" viewBox="0 0 12 12" fill="none" stroke="#c9c9c9" stroke-width="1.35" stroke-linejoin="round"><path d="M1.2 10.8l.7-2.9L8.6 1.2a1.1 1.1 0 0 1 1.6 0l.6.6a1.1 1.1 0 0 1 0 1.6L4.1 10.1z M7.4 2.4l2.2 2.2" /></svg>
<div class="t ty" style="top:332.15px;left:120.00px;color:#444;">Request</div>
<svg style="left:196.29px;top:332.51px" width="11.31" height="11.31" viewBox="0 0 12 12" fill="none" stroke="#c9c9c9" stroke-width="1.35" stroke-linejoin="round"><path d="M1.2 10.8l.7-2.9L8.6 1.2a1.1 1.1 0 0 1 1.6 0l.6.6a1.1 1.1 0 0 1 0 1.6L4.1 10.1z M7.4 2.4l2.2 2.2" /></svg>
<div class="t n rr" style="top:332.15px;right:910.97px;color:#444;">40.00</div>
<div class="t n rr" style="top:332.15px;right:857.66px;color:#444;">40.00</div>
<svg style="left:305.40px;top:332.51px" width="11.31" height="11.31" viewBox="0 0 12 12" fill="none" stroke="#c9c9c9" stroke-width="1.35" stroke-linejoin="round"><path d="M1.2 10.8l.7-2.9L8.6 1.2a1.1 1.1 0 0 1 1.6 0l.6.6a1.1 1.1 0 0 1 0 1.6L4.1 10.1z M7.4 2.4l2.2 2.2" /></svg>
<svg style="left:382.92px;top:332.51px" width="11.31" height="11.31" viewBox="0 0 12 12" fill="none" stroke="#c9c9c9" stroke-width="1.35" stroke-linejoin="round"><path d="M1.2 10.8l.7-2.9L8.6 1.2a1.1 1.1 0 0 1 1.6 0l.6.6a1.1 1.1 0 0 1 0 1.6L4.1 10.1z M7.4 2.4l2.2 2.2" /></svg>
<div class="t n rr" style="top:332.15px;right:702.27px;color:#444;">15.00</div>
<svg style="left:460.44px;top:332.51px" width="11.31" height="11.31" viewBox="0 0 12 12" fill="none" stroke="#c9c9c9" stroke-width="1.35" stroke-linejoin="round"><path d="M1.2 10.8l.7-2.9L8.6 1.2a1.1 1.1 0 0 1 1.6 0l.6.6a1.1 1.1 0 0 1 0 1.6L4.1 10.1z M7.4 2.4l2.2 2.2" /></svg>
<svg style="left:537.96px;top:332.51px" width="11.31" height="11.31" viewBox="0 0 12 12" fill="none" stroke="#c9c9c9" stroke-width="1.35" stroke-linejoin="round"><path d="M1.2 10.8l.7-2.9L8.6 1.2a1.1 1.1 0 0 1 1.6 0l.6.6a1.1 1.1 0 0 1 0 1.6L4.1 10.1z M7.4 2.4l2.2 2.2" /></svg>
<div class="t n rr" style="top:332.15px;right:547.23px;color:#444;">25.00</div>
<svg style="left:615.48px;top:332.51px" width="11.31" height="11.31" viewBox="0 0 12 12" fill="none" stroke="#c9c9c9" stroke-width="1.35" stroke-linejoin="round"><path d="M1.2 10.8l.7-2.9L8.6 1.2a1.1 1.1 0 0 1 1.6 0l.6.6a1.1 1.1 0 0 1 0 1.6L4.1 10.1z M7.4 2.4l2.2 2.2" /></svg>
<svg style="left:693.00px;top:332.51px" width="11.31" height="11.31" viewBox="0 0 12 12" fill="none" stroke="#c9c9c9" stroke-width="1.35" stroke-linejoin="round"><path d="M1.2 10.8l.7-2.9L8.6 1.2a1.1 1.1 0 0 1 1.6 0l.6.6a1.1 1.1 0 0 1 0 1.6L4.1 10.1z M7.4 2.4l2.2 2.2" /></svg>
<svg style="left:770.52px;top:332.51px" width="11.31" height="11.31" viewBox="0 0 12 12" fill="none" stroke="#c9c9c9" stroke-width="1.35" stroke-linejoin="round"><path d="M1.2 10.8l.7-2.9L8.6 1.2a1.1 1.1 0 0 1 1.6 0l.6.6a1.1 1.1 0 0 1 0 1.6L4.1 10.1z M7.4 2.4l2.2 2.2" /></svg>
<svg style="left:848.04px;top:332.51px" width="11.31" height="11.31" viewBox="0 0 12 12" fill="none" stroke="#c9c9c9" stroke-width="1.35" stroke-linejoin="round"><path d="M1.2 10.8l.7-2.9L8.6 1.2a1.1 1.1 0 0 1 1.6 0l.6.6a1.1 1.1 0 0 1 0 1.6L4.1 10.1z M7.4 2.4l2.2 2.2" /></svg>
<svg style="left:925.56px;top:332.51px" width="11.31" height="11.31" viewBox="0 0 12 12" fill="none" stroke="#c9c9c9" stroke-width="1.35" stroke-linejoin="round"><path d="M1.2 10.8l.7-2.9L8.6 1.2a1.1 1.1 0 0 1 1.6 0l.6.6a1.1 1.1 0 0 1 0 1.6L4.1 10.1z M7.4 2.4l2.2 2.2" /></svg>
<svg style="left:1003.08px;top:332.51px" width="11.31" height="11.31" viewBox="0 0 12 12" fill="none" stroke="#c9c9c9" stroke-width="1.35" stroke-linejoin="round"><path d="M1.2 10.8l.7-2.9L8.6 1.2a1.1 1.1 0 0 1 1.6 0l.6.6a1.1 1.1 0 0 1 0 1.6L4.1 10.1z M7.4 2.4l2.2 2.2" /></svg>
<svg style="left:1080.60px;top:332.51px" width="11.31" height="11.31" viewBox="0 0 12 12" fill="none" stroke="#c9c9c9" stroke-width="1.35" stroke-linejoin="round"><path d="M1.2 10.8l.7-2.9L8.6 1.2a1.1 1.1 0 0 1 1.6 0l.6.6a1.1 1.1 0 0 1 0 1.6L4.1 10.1z M7.4 2.4l2.2 2.2" /></svg>
<div class="t nm" style="top:352.28px;left:35.66px;color:#444;">RC_00007</div>
<div class="t ty" style="top:352.28px;left:120.00px;color:#444;">Commitment</div>
<svg style="left:196.29px;top:352.64px" width="11.31" height="11.31" viewBox="0 0 12 12" fill="none" stroke="#c9c9c9" stroke-width="1.35" stroke-linejoin="round"><path d="M1.2 10.8l.7-2.9L8.6 1.2a1.1 1.1 0 0 1 1.6 0l.6.6a1.1 1.1 0 0 1 0 1.6L4.1 10.1z M7.4 2.4l2.2 2.2" /></svg>
<div class="t n rr" style="top:352.28px;right:910.97px;color:#444;">20.00</div>
<div class="t n rr" style="top:352.28px;right:857.66px;color:#444;">20.00</div>
<svg style="left:305.40px;top:352.64px" width="11.31" height="11.31" viewBox="0 0 12 12" fill="none" stroke="#c9c9c9" stroke-width="1.35" stroke-linejoin="round"><path d="M1.2 10.8l.7-2.9L8.6 1.2a1.1 1.1 0 0 1 1.6 0l.6.6a1.1 1.1 0 0 1 0 1.6L4.1 10.1z M7.4 2.4l2.2 2.2" /></svg>
<svg style="left:382.92px;top:352.64px" width="11.31" height="11.31" viewBox="0 0 12 12" fill="none" stroke="#c9c9c9" stroke-width="1.35" stroke-linejoin="round"><path d="M1.2 10.8l.7-2.9L8.6 1.2a1.1 1.1 0 0 1 1.6 0l.6.6a1.1 1.1 0 0 1 0 1.6L4.1 10.1z M7.4 2.4l2.2 2.2" /></svg>
<div class="t n rr" style="top:352.28px;right:702.27px;color:#444;">0.80</div>
<svg style="left:460.44px;top:352.64px" width="11.31" height="11.31" viewBox="0 0 12 12" fill="none" stroke="#c9c9c9" stroke-width="1.35" stroke-linejoin="round"><path d="M1.2 10.8l.7-2.9L8.6 1.2a1.1 1.1 0 0 1 1.6 0l.6.6a1.1 1.1 0 0 1 0 1.6L4.1 10.1z M7.4 2.4l2.2 2.2" /></svg>
<div class="t n rr" style="top:352.28px;right:624.75px;color:#444;">9.20</div>
<svg style="left:537.96px;top:352.64px" width="11.31" height="11.31" viewBox="0 0 12 12" fill="none" stroke="#c9c9c9" stroke-width="1.35" stroke-linejoin="round"><path d="M1.2 10.8l.7-2.9L8.6 1.2a1.1 1.1 0 0 1 1.6 0l.6.6a1.1 1.1 0 0 1 0 1.6L4.1 10.1z M7.4 2.4l2.2 2.2" /></svg>
<div class="t n rr" style="top:352.28px;right:547.23px;color:#444;">8.00</div>
<svg style="left:615.48px;top:352.64px" width="11.31" height="11.31" viewBox="0 0 12 12" fill="none" stroke="#c9c9c9" stroke-width="1.35" stroke-linejoin="round"><path d="M1.2 10.8l.7-2.9L8.6 1.2a1.1 1.1 0 0 1 1.6 0l.6.6a1.1 1.1 0 0 1 0 1.6L4.1 10.1z M7.4 2.4l2.2 2.2" /></svg>
<div class="t n rr" style="top:352.28px;right:469.71px;color:#444;">2.00</div>
<svg style="left:693.00px;top:352.64px" width="11.31" height="11.31" viewBox="0 0 12 12" fill="none" stroke="#c9c9c9" stroke-width="1.35" stroke-linejoin="round"><path d="M1.2 10.8l.7-2.9L8.6 1.2a1.1 1.1 0 0 1 1.6 0l.6.6a1.1 1.1 0 0 1 0 1.6L4.1 10.1z M7.4 2.4l2.2 2.2" /></svg>
<svg style="left:770.52px;top:352.64px" width="11.31" height="11.31" viewBox="0 0 12 12" fill="none" stroke="#c9c9c9" stroke-width="1.35" stroke-linejoin="round"><path d="M1.2 10.8l.7-2.9L8.6 1.2a1.1 1.1 0 0 1 1.6 0l.6.6a1.1 1.1 0 0 1 0 1.6L4.1 10.1z M7.4 2.4l2.2 2.2" /></svg>
<svg style="left:848.04px;top:352.64px" width="11.31" height="11.31" viewBox="0 0 12 12" fill="none" stroke="#c9c9c9" stroke-width="1.35" stroke-linejoin="round"><path d="M1.2 10.8l.7-2.9L8.6 1.2a1.1 1.1 0 0 1 1.6 0l.6.6a1.1 1.1 0 0 1 0 1.6L4.1 10.1z M7.4 2.4l2.2 2.2" /></svg>
<svg style="left:925.56px;top:352.64px" width="11.31" height="11.31" viewBox="0 0 12 12" fill="none" stroke="#c9c9c9" stroke-width="1.35" stroke-linejoin="round"><path d="M1.2 10.8l.7-2.9L8.6 1.2a1.1 1.1 0 0 1 1.6 0l.6.6a1.1 1.1 0 0 1 0 1.6L4.1 10.1z M7.4 2.4l2.2 2.2" /></svg>
<svg style="left:1003.08px;top:352.64px" width="11.31" height="11.31" viewBox="0 0 12 12" fill="none" stroke="#c9c9c9" stroke-width="1.35" stroke-linejoin="round"><path d="M1.2 10.8l.7-2.9L8.6 1.2a1.1 1.1 0 0 1 1.6 0l.6.6a1.1 1.1 0 0 1 0 1.6L4.1 10.1z M7.4 2.4l2.2 2.2" /></svg>
<svg style="left:1080.60px;top:352.64px" width="11.31" height="11.31" viewBox="0 0 12 12" fill="none" stroke="#c9c9c9" stroke-width="1.35" stroke-linejoin="round"><path d="M1.2 10.8l.7-2.9L8.6 1.2a1.1 1.1 0 0 1 1.6 0l.6.6a1.1 1.1 0 0 1 0 1.6L4.1 10.1z M7.4 2.4l2.2 2.2" /></svg>
<div class="t nm" style="top:372.41px;left:35.66px;color:#444;">RC_00008</div>
<div class="t ty" style="top:372.41px;left:120.00px;color:#444;">Commitment</div>
<svg style="left:196.29px;top:372.77px" width="11.31" height="11.31" viewBox="0 0 12 12" fill="none" stroke="#c9c9c9" stroke-width="1.35" stroke-linejoin="round"><path d="M1.2 10.8l.7-2.9L8.6 1.2a1.1 1.1 0 0 1 1.6 0l.6.6a1.1 1.1 0 0 1 0 1.6L4.1 10.1z M7.4 2.4l2.2 2.2" /></svg>
<div class="t n rr" style="top:372.41px;right:910.97px;color:#444;">20.00</div>
<div class="t n rr" style="top:372.41px;right:857.66px;color:#444;">20.00</div>
<svg style="left:305.40px;top:372.77px" width="11.31" height="11.31" viewBox="0 0 12 12" fill="none" stroke="#c9c9c9" stroke-width="1.35" stroke-linejoin="round"><path d="M1.2 10.8l.7-2.9L8.6 1.2a1.1 1.1 0 0 1 1.6 0l.6.6a1.1 1.1 0 0 1 0 1.6L4.1 10.1z M7.4 2.4l2.2 2.2" /></svg>
<svg style="left:382.92px;top:372.77px" width="11.31" height="11.31" viewBox="0 0 12 12" fill="none" stroke="#c9c9c9" stroke-width="1.35" stroke-linejoin="round"><path d="M1.2 10.8l.7-2.9L8.6 1.2a1.1 1.1 0 0 1 1.6 0l.6.6a1.1 1.1 0 0 1 0 1.6L4.1 10.1z M7.4 2.4l2.2 2.2" /></svg>
<div class="t n rr" style="top:372.41px;right:702.27px;color:#444;">0.80</div>
<svg style="left:460.44px;top:372.77px" width="11.31" height="11.31" viewBox="0 0 12 12" fill="none" stroke="#c9c9c9" stroke-width="1.35" stroke-linejoin="round"><path d="M1.2 10.8l.7-2.9L8.6 1.2a1.1 1.1 0 0 1 1.6 0l.6.6a1.1 1.1 0 0 1 0 1.6L4.1 10.1z M7.4 2.4l2.2 2.2" /></svg>
<div class="t n rr" style="top:372.41px;right:624.75px;color:#444;">9.20</div>
<svg style="left:537.96px;top:372.77px" width="11.31" height="11.31" viewBox="0 0 12 12" fill="none" stroke="#c9c9c9" stroke-width="1.35" stroke-linejoin="round"><path d="M1.2 10.8l.7-2.9L8.6 1.2a1.1 1.1 0 0 1 1.6 0l.6.6a1.1 1.1 0 0 1 0 1.6L4.1 10.1z M7.4 2.4l2.2 2.2" /></svg>
<div class="t n rr" style="top:372.41px;right:547.23px;color:#444;">8.00</div>
<svg style="left:615.48px;top:372.77px" width="11.31" height="11.31" viewBox="0 0 12 12" fill="none" stroke="#c9c9c9" stroke-width="1.35" stroke-linejoin="round"><path d="M1.2 10.8l.7-2.9L8.6 1.2a1.1 1.1 0 0 1 1.6 0l.6.6a1.1 1.1 0 0 1 0 1.6L4.1 10.1z M7.4 2.4l2.2 2.2" /></svg>
<div class="t n rr" style="top:372.41px;right:469.71px;color:#444;">2.00</div>
<svg style="left:693.00px;top:372.77px" width="11.31" height="11.31" viewBox="0 0 12 12" fill="none" stroke="#c9c9c9" stroke-width="1.35" stroke-linejoin="round"><path d="M1.2 10.8l.7-2.9L8.6 1.2a1.1 1.1 0 0 1 1.6 0l.6.6a1.1 1.1 0 0 1 0 1.6L4.1 10.1z M7.4 2.4l2.2 2.2" /></svg>
<svg style="left:770.52px;top:372.77px" width="11.31" height="11.31" viewBox="0 0 12 12" fill="none" stroke="#c9c9c9" stroke-width="1.35" stroke-linejoin="round"><path d="M1.2 10.8l.7-2.9L8.6 1.2a1.1 1.1 0 0 1 1.6 0l.6.6a1.1 1.1 0 0 1 0 1.6L4.1 10.1z M7.4 2.4l2.2 2.2" /></svg>
<svg style="left:848.04px;top:372.77px" width="11.31" height="11.31" viewBox="0 0 12 12" fill="none" stroke="#c9c9c9" stroke-width="1.35" stroke-linejoin="round"><path d="M1.2 10.8l.7-2.9L8.6 1.2a1.1 1.1 0 0 1 1.6 0l.6.6a1.1 1.1 0 0 1 0 1.6L4.1 10.1z M7.4 2.4l2.2 2.2" /></svg>
<svg style="left:925.56px;top:372.77px" width="11.31" height="11.31" viewBox="0 0 12 12" fill="none" stroke="#c9c9c9" stroke-width="1.35" stroke-linejoin="round"><path d="M1.2 10.8l.7-2.9L8.6 1.2a1.1 1.1 0 0 1 1.6 0l.6.6a1.1 1.1 0 0 1 0 1.6L4.1 10.1z M7.4 2.4l2.2 2.2" /></svg>
<svg style="left:1003.08px;top:372.77px" width="11.31" height="11.31" viewBox="0 0 12 12" fill="none" stroke="#c9c9c9" stroke-width="1.35" stroke-linejoin="round"><path d="M1.2 10.8l.7-2.9L8.6 1.2a1.1 1.1 0 0 1 1.6 0l.6.6a1.1 1.1 0 0 1 0 1.6L4.1 10.1z M7.4 2.4l2.2 2.2" /></svg>
<svg style="left:1080.60px;top:372.77px" width="11.31" height="11.31" viewBox="0 0 12 12" fill="none" stroke="#c9c9c9" stroke-width="1.35" stroke-linejoin="round"><path d="M1.2 10.8l.7-2.9L8.6 1.2a1.1 1.1 0 0 1 1.6 0l.6.6a1.1 1.1 0 0 1 0 1.6L4.1 10.1z M7.4 2.4l2.2 2.2" /></svg>
<div class="t nm" style="top:392.54px;left:35.66px;color:#444;">RR_00016</div>
<div class="t ty" style="top:392.54px;left:120.00px;color:#444;">Request</div>
<svg style="left:196.29px;top:392.90px" width="11.31" height="11.31" viewBox="0 0 12 12" fill="none" stroke="#c9c9c9" stroke-width="1.35" stroke-linejoin="round"><path d="M1.2 10.8l.7-2.9L8.6 1.2a1.1 1.1 0 0 1 1.6 0l.6.6a1.1 1.1 0 0 1 0 1.6L4.1 10.1z M7.4 2.4l2.2 2.2" /></svg>
<div class="t n rr" style="top:392.54px;right:910.97px;color:#444;">15.00</div>
<div class="t n rr" style="top:392.54px;right:857.66px;color:#444;">15.00</div>
<svg style="left:305.40px;top:392.90px" width="11.31" height="11.31" viewBox="0 0 12 12" fill="none" stroke="#c9c9c9" stroke-width="1.35" stroke-linejoin="round"><path d="M1.2 10.8l.7-2.9L8.6 1.2a1.1 1.1 0 0 1 1.6 0l.6.6a1.1 1.1 0 0 1 0 1.6L4.1 10.1z M7.4 2.4l2.2 2.2" /></svg>
<svg style="left:382.92px;top:392.90px" width="11.31" height="11.31" viewBox="0 0 12 12" fill="none" stroke="#c9c9c9" stroke-width="1.35" stroke-linejoin="round"><path d="M1.2 10.8l.7-2.9L8.6 1.2a1.1 1.1 0 0 1 1.6 0l.6.6a1.1 1.1 0 0 1 0 1.6L4.1 10.1z M7.4 2.4l2.2 2.2" /></svg>
<div class="t n rr" style="top:392.54px;right:702.27px;color:#444;">15.00</div>
<svg style="left:460.44px;top:392.90px" width="11.31" height="11.31" viewBox="0 0 12 12" fill="none" stroke="#c9c9c9" stroke-width="1.35" stroke-linejoin="round"><path d="M1.2 10.8l.7-2.9L8.6 1.2a1.1 1.1 0 0 1 1.6 0l.6.6a1.1 1.1 0 0 1 0 1.6L4.1 10.1z M7.4 2.4l2.2 2.2" /></svg>
<svg style="left:537.96px;top:392.90px" width="11.31" height="11.31" viewBox="0 0 12 12" fill="none" stroke="#c9c9c9" stroke-width="1.35" stroke-linejoin="round"><path d="M1.2 10.8l.7-2.9L8.6 1.2a1.1 1.1 0 0 1 1.6 0l.6.6a1.1 1.1 0 0 1 0 1.6L4.1 10.1z M7.4 2.4l2.2 2.2" /></svg>
<svg style="left:615.48px;top:392.90px" width="11.31" height="11.31" viewBox="0 0 12 12" fill="none" stroke="#c9c9c9" stroke-width="1.35" stroke-linejoin="round"><path d="M1.2 10.8l.7-2.9L8.6 1.2a1.1 1.1 0 0 1 1.6 0l.6.6a1.1 1.1 0 0 1 0 1.6L4.1 10.1z M7.4 2.4l2.2 2.2" /></svg>
<svg style="left:693.00px;top:392.90px" width="11.31" height="11.31" viewBox="0 0 12 12" fill="none" stroke="#c9c9c9" stroke-width="1.35" stroke-linejoin="round"><path d="M1.2 10.8l.7-2.9L8.6 1.2a1.1 1.1 0 0 1 1.6 0l.6.6a1.1 1.1 0 0 1 0 1.6L4.1 10.1z M7.4 2.4l2.2 2.2" /></svg>
<svg style="left:770.52px;top:392.90px" width="11.31" height="11.31" viewBox="0 0 12 12" fill="none" stroke="#c9c9c9" stroke-width="1.35" stroke-linejoin="round"><path d="M1.2 10.8l.7-2.9L8.6 1.2a1.1 1.1 0 0 1 1.6 0l.6.6a1.1 1.1 0 0 1 0 1.6L4.1 10.1z M7.4 2.4l2.2 2.2" /></svg>
<svg style="left:848.04px;top:392.90px" width="11.31" height="11.31" viewBox="0 0 12 12" fill="none" stroke="#c9c9c9" stroke-width="1.35" stroke-linejoin="round"><path d="M1.2 10.8l.7-2.9L8.6 1.2a1.1 1.1 0 0 1 1.6 0l.6.6a1.1 1.1 0 0 1 0 1.6L4.1 10.1z M7.4 2.4l2.2 2.2" /></svg>
<svg style="left:925.56px;top:392.90px" width="11.31" height="11.31" viewBox="0 0 12 12" fill="none" stroke="#c9c9c9" stroke-width="1.35" stroke-linejoin="round"><path d="M1.2 10.8l.7-2.9L8.6 1.2a1.1 1.1 0 0 1 1.6 0l.6.6a1.1 1.1 0 0 1 0 1.6L4.1 10.1z M7.4 2.4l2.2 2.2" /></svg>
<svg style="left:1003.08px;top:392.90px" width="11.31" height="11.31" viewBox="0 0 12 12" fill="none" stroke="#c9c9c9" stroke-width="1.35" stroke-linejoin="round"><path d="M1.2 10.8l.7-2.9L8.6 1.2a1.1 1.1 0 0 1 1.6 0l.6.6a1.1 1.1 0 0 1 0 1.6L4.1 10.1z M7.4 2.4l2.2 2.2" /></svg>
<svg style="left:1080.60px;top:392.90px" width="11.31" height="11.31" viewBox="0 0 12 12" fill="none" stroke="#c9c9c9" stroke-width="1.35" stroke-linejoin="round"><path d="M1.2 10.8l.7-2.9L8.6 1.2a1.1 1.1 0 0 1 1.6 0l.6.6a1.1 1.1 0 0 1 0 1.6L4.1 10.1z M7.4 2.4l2.2 2.2" /></svg>
<div class="t nm" style="top:412.67px;left:35.66px;color:#444;">RR_00021</div>
<div class="t ty" style="top:412.67px;left:120.00px;color:#444;">Request</div>
<svg style="left:196.29px;top:413.03px" width="11.31" height="11.31" viewBox="0 0 12 12" fill="none" stroke="#c9c9c9" stroke-width="1.35" stroke-linejoin="round"><path d="M1.2 10.8l.7-2.9L8.6 1.2a1.1 1.1 0 0 1 1.6 0l.6.6a1.1 1.1 0 0 1 0 1.6L4.1 10.1z M7.4 2.4l2.2 2.2" /></svg>
<div class="t n rr" style="top:412.67px;right:910.97px;color:#444;">25.00</div>
<div class="t n rr" style="top:412.67px;right:857.66px;color:#444;">25.00</div>
<svg style="left:305.40px;top:413.03px" width="11.31" height="11.31" viewBox="0 0 12 12" fill="none" stroke="#c9c9c9" stroke-width="1.35" stroke-linejoin="round"><path d="M1.2 10.8l.7-2.9L8.6 1.2a1.1 1.1 0 0 1 1.6 0l.6.6a1.1 1.1 0 0 1 0 1.6L4.1 10.1z M7.4 2.4l2.2 2.2" /></svg>
<svg style="left:382.92px;top:413.03px" width="11.31" height="11.31" viewBox="0 0 12 12" fill="none" stroke="#c9c9c9" stroke-width="1.35" stroke-linejoin="round"><path d="M1.2 10.8l.7-2.9L8.6 1.2a1.1 1.1 0 0 1 1.6 0l.6.6a1.1 1.1 0 0 1 0 1.6L4.1 10.1z M7.4 2.4l2.2 2.2" /></svg>
<svg style="left:460.44px;top:413.03px" width="11.31" height="11.31" viewBox="0 0 12 12" fill="none" stroke="#c9c9c9" stroke-width="1.35" stroke-linejoin="round"><path d="M1.2 10.8l.7-2.9L8.6 1.2a1.1 1.1 0 0 1 1.6 0l.6.6a1.1 1.1 0 0 1 0 1.6L4.1 10.1z M7.4 2.4l2.2 2.2" /></svg>
<svg style="left:537.96px;top:413.03px" width="11.31" height="11.31" viewBox="0 0 12 12" fill="none" stroke="#c9c9c9" stroke-width="1.35" stroke-linejoin="round"><path d="M1.2 10.8l.7-2.9L8.6 1.2a1.1 1.1 0 0 1 1.6 0l.6.6a1.1 1.1 0 0 1 0 1.6L4.1 10.1z M7.4 2.4l2.2 2.2" /></svg>
<div class="t n rr" style="top:412.67px;right:547.23px;color:#444;">25.00</div>
<svg style="left:615.48px;top:413.03px" width="11.31" height="11.31" viewBox="0 0 12 12" fill="none" stroke="#c9c9c9" stroke-width="1.35" stroke-linejoin="round"><path d="M1.2 10.8l.7-2.9L8.6 1.2a1.1 1.1 0 0 1 1.6 0l.6.6a1.1 1.1 0 0 1 0 1.6L4.1 10.1z M7.4 2.4l2.2 2.2" /></svg>
<svg style="left:693.00px;top:413.03px" width="11.31" height="11.31" viewBox="0 0 12 12" fill="none" stroke="#c9c9c9" stroke-width="1.35" stroke-linejoin="round"><path d="M1.2 10.8l.7-2.9L8.6 1.2a1.1 1.1 0 0 1 1.6 0l.6.6a1.1 1.1 0 0 1 0 1.6L4.1 10.1z M7.4 2.4l2.2 2.2" /></svg>
<svg style="left:770.52px;top:413.03px" width="11.31" height="11.31" viewBox="0 0 12 12" fill="none" stroke="#c9c9c9" stroke-width="1.35" stroke-linejoin="round"><path d="M1.2 10.8l.7-2.9L8.6 1.2a1.1 1.1 0 0 1 1.6 0l.6.6a1.1 1.1 0 0 1 0 1.6L4.1 10.1z M7.4 2.4l2.2 2.2" /></svg>
<svg style="left:848.04px;top:413.03px" width="11.31" height="11.31" viewBox="0 0 12 12" fill="none" stroke="#c9c9c9" stroke-width="1.35" stroke-linejoin="round"><path d="M1.2 10.8l.7-2.9L8.6 1.2a1.1 1.1 0 0 1 1.6 0l.6.6a1.1 1.1 0 0 1 0 1.6L4.1 10.1z M7.4 2.4l2.2 2.2" /></svg>
<svg style="left:925.56px;top:413.03px" width="11.31" height="11.31" viewBox="0 0 12 12" fill="none" stroke="#c9c9c9" stroke-width="1.35" stroke-linejoin="round"><path d="M1.2 10.8l.7-2.9L8.6 1.2a1.1 1.1 0 0 1 1.6 0l.6.6a1.1 1.1 0 0 1 0 1.6L4.1 10.1z M7.4 2.4l2.2 2.2" /></svg>
<svg style="left:1003.08px;top:413.03px" width="11.31" height="11.31" viewBox="0 0 12 12" fill="none" stroke="#c9c9c9" stroke-width="1.35" stroke-linejoin="round"><path d="M1.2 10.8l.7-2.9L8.6 1.2a1.1 1.1 0 0 1 1.6 0l.6.6a1.1 1.1 0 0 1 0 1.6L4.1 10.1z M7.4 2.4l2.2 2.2" /></svg>
<svg style="left:1080.60px;top:413.03px" width="11.31" height="11.31" viewBox="0 0 12 12" fill="none" stroke="#c9c9c9" stroke-width="1.35" stroke-linejoin="round"><path d="M1.2 10.8l.7-2.9L8.6 1.2a1.1 1.1 0 0 1 1.6 0l.6.6a1.1 1.1 0 0 1 0 1.6L4.1 10.1z M7.4 2.4l2.2 2.2" /></svg>
<svg style="left:9.60px;top:434.87px" width="10.11" height="8.91" viewBox="0 0 12 10" fill="none" stroke="#222" stroke-width="1.5"><path d="M4.4 1.4h7.4M4.4 5h7.4M4.4 8.6h7.4"/><path d="M.4 1.4h2.6M.4 5h2.6M.4 8.6h2.6" stroke="#444" stroke-dasharray="1.1 .4"/></svg>
<div class="t b" style="top:432.80px;left:23.31px;">Erstellen eines ...</div>
<div class="abs" style="left:105.26px;top:438.81px;width:7.54px;height:1.54px;background:#222"></div>
<div class="t ty b" style="top:432.80px;left:120.00px;">Commitment</div>
<svg style="left:196.29px;top:433.16px" width="11.31" height="11.31" viewBox="0 0 12 12" fill="none" stroke="#c9c9c9" stroke-width="1.35" stroke-linejoin="round"><path d="M1.2 10.8l.7-2.9L8.6 1.2a1.1 1.1 0 0 1 1.6 0l.6.6a1.1 1.1 0 0 1 0 1.6L4.1 10.1z M7.4 2.4l2.2 2.2" /></svg>
<div class="t b n rr" style="top:432.80px;right:910.97px;">40.00</div>
<div class="t b n rr" style="top:432.80px;right:857.66px;">40.00</div>
<svg style="left:305.40px;top:433.16px" width="11.31" height="11.31" viewBox="0 0 12 12" fill="none" stroke="#c9c9c9" stroke-width="1.35" stroke-linejoin="round"><path d="M1.2 10.8l.7-2.9L8.6 1.2a1.1 1.1 0 0 1 1.6 0l.6.6a1.1 1.1 0 0 1 0 1.6L4.1 10.1z M7.4 2.4l2.2 2.2" /></svg>
<svg style="left:382.92px;top:433.16px" width="11.31" height="11.31" viewBox="0 0 12 12" fill="none" stroke="#c9c9c9" stroke-width="1.35" stroke-linejoin="round"><path d="M1.2 10.8l.7-2.9L8.6 1.2a1.1 1.1 0 0 1 1.6 0l.6.6a1.1 1.1 0 0 1 0 1.6L4.1 10.1z M7.4 2.4l2.2 2.2" /></svg>
<svg style="left:460.44px;top:433.16px" width="11.31" height="11.31" viewBox="0 0 12 12" fill="none" stroke="#c9c9c9" stroke-width="1.35" stroke-linejoin="round"><path d="M1.2 10.8l.7-2.9L8.6 1.2a1.1 1.1 0 0 1 1.6 0l.6.6a1.1 1.1 0 0 1 0 1.6L4.1 10.1z M7.4 2.4l2.2 2.2" /></svg>
<svg style="left:537.96px;top:433.16px" width="11.31" height="11.31" viewBox="0 0 12 12" fill="none" stroke="#c9c9c9" stroke-width="1.35" stroke-linejoin="round"><path d="M1.2 10.8l.7-2.9L8.6 1.2a1.1 1.1 0 0 1 1.6 0l.6.6a1.1 1.1 0 0 1 0 1.6L4.1 10.1z M7.4 2.4l2.2 2.2" /></svg>
<div class="t b n rr" style="top:432.80px;right:547.23px;">26.67</div>
<svg style="left:615.48px;top:433.16px" width="11.31" height="11.31" viewBox="0 0 12 12" fill="none" stroke="#c9c9c9" stroke-width="1.35" stroke-linejoin="round"><path d="M1.2 10.8l.7-2.9L8.6 1.2a1.1 1.1 0 0 1 1.6 0l.6.6a1.1 1.1 0 0 1 0 1.6L4.1 10.1z M7.4 2.4l2.2 2.2" /></svg>
<div class="t b n rr" style="top:432.80px;right:469.71px;">13.33</div>
<svg style="left:693.00px;top:433.16px" width="11.31" height="11.31" viewBox="0 0 12 12" fill="none" stroke="#c9c9c9" stroke-width="1.35" stroke-linejoin="round"><path d="M1.2 10.8l.7-2.9L8.6 1.2a1.1 1.1 0 0 1 1.6 0l.6.6a1.1 1.1 0 0 1 0 1.6L4.1 10.1z M7.4 2.4l2.2 2.2" /></svg>
<svg style="left:770.52px;top:433.16px" width="11.31" height="11.31" viewBox="0 0 12 12" fill="none" stroke="#c9c9c9" stroke-width="1.35" stroke-linejoin="round"><path d="M1.2 10.8l.7-2.9L8.6 1.2a1.1 1.1 0 0 1 1.6 0l.6.6a1.1 1.1 0 0 1 0 1.6L4.1 10.1z M7.4 2.4l2.2 2.2" /></svg>
<svg style="left:848.04px;top:433.16px" width="11.31" height="11.31" viewBox="0 0 12 12" fill="none" stroke="#c9c9c9" stroke-width="1.35" stroke-linejoin="round"><path d="M1.2 10.8l.7-2.9L8.6 1.2a1.1 1.1 0 0 1 1.6 0l.6.6a1.1 1.1 0 0 1 0 1.6L4.1 10.1z M7.4 2.4l2.2 2.2" /></svg>
<svg style="left:925.56px;top:433.16px" width="11.31" height="11.31" viewBox="0 0 12 12" fill="none" stroke="#c9c9c9" stroke-width="1.35" stroke-linejoin="round"><path d="M1.2 10.8l.7-2.9L8.6 1.2a1.1 1.1 0 0 1 1.6 0l.6.6a1.1 1.1 0 0 1 0 1.6L4.1 10.1z M7.4 2.4l2.2 2.2" /></svg>
<svg style="left:1003.08px;top:433.16px" width="11.31" height="11.31" viewBox="0 0 12 12" fill="none" stroke="#c9c9c9" stroke-width="1.35" stroke-linejoin="round"><path d="M1.2 10.8l.7-2.9L8.6 1.2a1.1 1.1 0 0 1 1.6 0l.6.6a1.1 1.1 0 0 1 0 1.6L4.1 10.1z M7.4 2.4l2.2 2.2" /></svg>
<svg style="left:1080.60px;top:433.16px" width="11.31" height="11.31" viewBox="0 0 12 12" fill="none" stroke="#c9c9c9" stroke-width="1.35" stroke-linejoin="round"><path d="M1.2 10.8l.7-2.9L8.6 1.2a1.1 1.1 0 0 1 1.6 0l.6.6a1.1 1.1 0 0 1 0 1.6L4.1 10.1z M7.4 2.4l2.2 2.2" /></svg>
<div class="t ty b" style="top:452.93px;left:120.00px;">Request</div>
<svg style="left:196.29px;top:453.29px" width="11.31" height="11.31" viewBox="0 0 12 12" fill="none" stroke="#c9c9c9" stroke-width="1.35" stroke-linejoin="round"><path d="M1.2 10.8l.7-2.9L8.6 1.2a1.1 1.1 0 0 1 1.6 0l.6.6a1.1 1.1 0 0 1 0 1.6L4.1 10.1z M7.4 2.4l2.2 2.2" /></svg>
<div class="t b n rr" style="top:452.93px;right:910.97px;">65.00</div>
<div class="t b n rr" style="top:452.93px;right:857.66px;">65.00</div>
<svg style="left:305.40px;top:453.29px" width="11.31" height="11.31" viewBox="0 0 12 12" fill="none" stroke="#c9c9c9" stroke-width="1.35" stroke-linejoin="round"><path d="M1.2 10.8l.7-2.9L8.6 1.2a1.1 1.1 0 0 1 1.6 0l.6.6a1.1 1.1 0 0 1 0 1.6L4.1 10.1z M7.4 2.4l2.2 2.2" /></svg>
<svg style="left:382.92px;top:453.29px" width="11.31" height="11.31" viewBox="0 0 12 12" fill="none" stroke="#c9c9c9" stroke-width="1.35" stroke-linejoin="round"><path d="M1.2 10.8l.7-2.9L8.6 1.2a1.1 1.1 0 0 1 1.6 0l.6.6a1.1 1.1 0 0 1 0 1.6L4.1 10.1z M7.4 2.4l2.2 2.2" /></svg>
<div class="t b n rr" style="top:452.93px;right:702.27px;">15.00</div>
<svg style="left:460.44px;top:453.29px" width="11.31" height="11.31" viewBox="0 0 12 12" fill="none" stroke="#c9c9c9" stroke-width="1.35" stroke-linejoin="round"><path d="M1.2 10.8l.7-2.9L8.6 1.2a1.1 1.1 0 0 1 1.6 0l.6.6a1.1 1.1 0 0 1 0 1.6L4.1 10.1z M7.4 2.4l2.2 2.2" /></svg>
<svg style="left:537.96px;top:453.29px" width="11.31" height="11.31" viewBox="0 0 12 12" fill="none" stroke="#c9c9c9" stroke-width="1.35" stroke-linejoin="round"><path d="M1.2 10.8l.7-2.9L8.6 1.2a1.1 1.1 0 0 1 1.6 0l.6.6a1.1 1.1 0 0 1 0 1.6L4.1 10.1z M7.4 2.4l2.2 2.2" /></svg>
<div class="t b n rr" style="top:452.93px;right:547.23px;">25.00</div>
<svg style="left:615.48px;top:453.29px" width="11.31" height="11.31" viewBox="0 0 12 12" fill="none" stroke="#c9c9c9" stroke-width="1.35" stroke-linejoin="round"><path d="M1.2 10.8l.7-2.9L8.6 1.2a1.1 1.1 0 0 1 1.6 0l.6.6a1.1 1.1 0 0 1 0 1.6L4.1 10.1z M7.4 2.4l2.2 2.2" /></svg>
<div class="t b n rr" style="top:452.93px;right:469.71px;">25.00</div>
<svg style="left:693.00px;top:453.29px" width="11.31" height="11.31" viewBox="0 0 12 12" fill="none" stroke="#c9c9c9" stroke-width="1.35" stroke-linejoin="round"><path d="M1.2 10.8l.7-2.9L8.6 1.2a1.1 1.1 0 0 1 1.6 0l.6.6a1.1 1.1 0 0 1 0 1.6L4.1 10.1z M7.4 2.4l2.2 2.2" /></svg>
<svg style="left:770.52px;top:453.29px" width="11.31" height="11.31" viewBox="0 0 12 12" fill="none" stroke="#c9c9c9" stroke-width="1.35" stroke-linejoin="round"><path d="M1.2 10.8l.7-2.9L8.6 1.2a1.1 1.1 0 0 1 1.6 0l.6.6a1.1 1.1 0 0 1 0 1.6L4.1 10.1z M7.4 2.4l2.2 2.2" /></svg>
<svg style="left:848.04px;top:453.29px" width="11.31" height="11.31" viewBox="0 0 12 12" fill="none" stroke="#c9c9c9" stroke-width="1.35" stroke-linejoin="round"><path d="M1.2 10.8l.7-2.9L8.6 1.2a1.1 1.1 0 0 1 1.6 0l.6.6a1.1 1.1 0 0 1 0 1.6L4.1 10.1z M7.4 2.4l2.2 2.2" /></svg>
<svg style="left:925.56px;top:453.29px" width="11.31" height="11.31" viewBox="0 0 12 12" fill="none" stroke="#c9c9c9" stroke-width="1.35" stroke-linejoin="round"><path d="M1.2 10.8l.7-2.9L8.6 1.2a1.1 1.1 0 0 1 1.6 0l.6.6a1.1 1.1 0 0 1 0 1.6L4.1 10.1z M7.4 2.4l2.2 2.2" /></svg>
<svg style="left:1003.08px;top:453.29px" width="11.31" height="11.31" viewBox="0 0 12 12" fill="none" stroke="#c9c9c9" stroke-width="1.35" stroke-linejoin="round"><path d="M1.2 10.8l.7-2.9L8.6 1.2a1.1 1.1 0 0 1 1.6 0l.6.6a1.1 1.1 0 0 1 0 1.6L4.1 10.1z M7.4 2.4l2.2 2.2" /></svg>
<svg style="left:1080.60px;top:453.29px" width="11.31" height="11.31" viewBox="0 0 12 12" fill="none" stroke="#c9c9c9" stroke-width="1.35" stroke-linejoin="round"><path d="M1.2 10.8l.7-2.9L8.6 1.2a1.1 1.1 0 0 1 1.6 0l.6.6a1.1 1.1 0 0 1 0 1.6L4.1 10.1z M7.4 2.4l2.2 2.2" /></svg>
<svg style="left:21.60px;top:475.22px" width="9.60" height="8.91" viewBox="0 0 10.8 10" fill="#ece8ee" stroke="#3a3a3a" stroke-width="1.15"><rect x=".7" y=".7" width="9.4" height="8.6" rx="1.2"/><path d="M.7 4.2h9.4M5.4 .7v3.5" stroke-width=".9"/><rect x="1.6" y="1.6" width="3.2" height="2.2" fill="#222" stroke="none"/><rect x="2.2" y="5.6" width="3.2" height="2.2" fill="#777" stroke="none"/></svg>
<div class="t nm" style="top:473.06px;left:35.14px;color:#444;">Puente de la...</div>
<div class="abs" style="left:105.26px;top:479.07px;width:7.54px;height:1.54px;background:#222"></div>
<div class="t ty" style="top:473.06px;left:120.00px;color:#444;">Commitment</div>
<svg style="left:196.29px;top:473.42px" width="11.31" height="11.31" viewBox="0 0 12 12" fill="none" stroke="#c9c9c9" stroke-width="1.35" stroke-linejoin="round"><path d="M1.2 10.8l.7-2.9L8.6 1.2a1.1 1.1 0 0 1 1.6 0l.6.6a1.1 1.1 0 0 1 0 1.6L4.1 10.1z M7.4 2.4l2.2 2.2" /></svg>
<div class="t n rr" style="top:473.06px;right:910.97px;color:#444;">40.00</div>
<div class="t n rr" style="top:473.06px;right:857.66px;color:#444;">40.00</div>
<svg style="left:305.40px;top:473.42px" width="11.31" height="11.31" viewBox="0 0 12 12" fill="none" stroke="#c9c9c9" stroke-width="1.35" stroke-linejoin="round"><path d="M1.2 10.8l.7-2.9L8.6 1.2a1.1 1.1 0 0 1 1.6 0l.6.6a1.1 1.1 0 0 1 0 1.6L4.1 10.1z M7.4 2.4l2.2 2.2" /></svg>
<svg style="left:382.92px;top:473.42px" width="11.31" height="11.31" viewBox="0 0 12 12" fill="none" stroke="#c9c9c9" stroke-width="1.35" stroke-linejoin="round"><path d="M1.2 10.8l.7-2.9L8.6 1.2a1.1 1.1 0 0 1 1.6 0l.6.6a1.1 1.1 0 0 1 0 1.6L4.1 10.1z M7.4 2.4l2.2 2.2" /></svg>
<svg style="left:460.44px;top:473.42px" width="11.31" height="11.31" viewBox="0 0 12 12" fill="none" stroke="#c9c9c9" stroke-width="1.35" stroke-linejoin="round"><path d="M1.2 10.8l.7-2.9L8.6 1.2a1.1 1.1 0 0 1 1.6 0l.6.6a1.1 1.1 0 0 1 0 1.6L4.1 10.1z M7.4 2.4l2.2 2.2" /></svg>
<svg style="left:537.96px;top:473.42px" width="11.31" height="11.31" viewBox="0 0 12 12" fill="none" stroke="#c9c9c9" stroke-width="1.35" stroke-linejoin="round"><path d="M1.2 10.8l.7-2.9L8.6 1.2a1.1 1.1 0 0 1 1.6 0l.6.6a1.1 1.1 0 0 1 0 1.6L4.1 10.1z M7.4 2.4l2.2 2.2" /></svg>
<div class="t n rr" style="top:473.06px;right:547.23px;color:#444;">26.67</div>
<svg style="left:615.48px;top:473.42px" width="11.31" height="11.31" viewBox="0 0 12 12" fill="none" stroke="#c9c9c9" stroke-width="1.35" stroke-linejoin="round"><path d="M1.2 10.8l.7-2.9L8.6 1.2a1.1 1.1 0 0 1 1.6 0l.6.6a1.1 1.1 0 0 1 0 1.6L4.1 10.1z M7.4 2.4l2.2 2.2" /></svg>
<div class="t n rr" style="top:473.06px;right:469.71px;color:#444;">13.33</div>
<svg style="left:693.00px;top:473.42px" width="11.31" height="11.31" viewBox="0 0 12 12" fill="none" stroke="#c9c9c9" stroke-width="1.35" stroke-linejoin="round"><path d="M1.2 10.8l.7-2.9L8.6 1.2a1.1 1.1 0 0 1 1.6 0l.6.6a1.1 1.1 0 0 1 0 1.6L4.1 10.1z M7.4 2.4l2.2 2.2" /></svg>
<svg style="left:770.52px;top:473.42px" width="11.31" height="11.31" viewBox="0 0 12 12" fill="none" stroke="#c9c9c9" stroke-width="1.35" stroke-linejoin="round"><path d="M1.2 10.8l.7-2.9L8.6 1.2a1.1 1.1 0 0 1 1.6 0l.6.6a1.1 1.1 0 0 1 0 1.6L4.1 10.1z M7.4 2.4l2.2 2.2" /></svg>
<svg style="left:848.04px;top:473.42px" width="11.31" height="11.31" viewBox="0 0 12 12" fill="none" stroke="#c9c9c9" stroke-width="1.35" stroke-linejoin="round"><path d="M1.2 10.8l.7-2.9L8.6 1.2a1.1 1.1 0 0 1 1.6 0l.6.6a1.1 1.1 0 0 1 0 1.6L4.1 10.1z M7.4 2.4l2.2 2.2" /></svg>
<svg style="left:925.56px;top:473.42px" width="11.31" height="11.31" viewBox="0 0 12 12" fill="none" stroke="#c9c9c9" stroke-width="1.35" stroke-linejoin="round"><path d="M1.2 10.8l.7-2.9L8.6 1.2a1.1 1.1 0 0 1 1.6 0l.6.6a1.1 1.1 0 0 1 0 1.6L4.1 10.1z M7.4 2.4l2.2 2.2" /></svg>
<svg style="left:1003.08px;top:473.42px" width="11.31" height="11.31" viewBox="0 0 12 12" fill="none" stroke="#c9c9c9" stroke-width="1.35" stroke-linejoin="round"><path d="M1.2 10.8l.7-2.9L8.6 1.2a1.1 1.1 0 0 1 1.6 0l.6.6a1.1 1.1 0 0 1 0 1.6L4.1 10.1z M7.4 2.4l2.2 2.2" /></svg>
<svg style="left:1080.60px;top:473.42px" width="11.31" height="11.31" viewBox="0 0 12 12" fill="none" stroke="#c9c9c9" stroke-width="1.35" stroke-linejoin="round"><path d="M1.2 10.8l.7-2.9L8.6 1.2a1.1 1.1 0 0 1 1.6 0l.6.6a1.1 1.1 0 0 1 0 1.6L4.1 10.1z M7.4 2.4l2.2 2.2" /></svg>
<div class="t ty" style="top:493.18px;left:120.00px;color:#444;">Request</div>
<svg style="left:196.29px;top:493.54px" width="11.31" height="11.31" viewBox="0 0 12 12" fill="none" stroke="#c9c9c9" stroke-width="1.35" stroke-linejoin="round"><path d="M1.2 10.8l.7-2.9L8.6 1.2a1.1 1.1 0 0 1 1.6 0l.6.6a1.1 1.1 0 0 1 0 1.6L4.1 10.1z M7.4 2.4l2.2 2.2" /></svg>
<div class="t n rr" style="top:493.18px;right:910.97px;color:#444;">65.00</div>
<div class="t n rr" style="top:493.18px;right:857.66px;color:#444;">65.00</div>
<svg style="left:305.40px;top:493.54px" width="11.31" height="11.31" viewBox="0 0 12 12" fill="none" stroke="#c9c9c9" stroke-width="1.35" stroke-linejoin="round"><path d="M1.2 10.8l.7-2.9L8.6 1.2a1.1 1.1 0 0 1 1.6 0l.6.6a1.1 1.1 0 0 1 0 1.6L4.1 10.1z M7.4 2.4l2.2 2.2" /></svg>
<svg style="left:382.92px;top:493.54px" width="11.31" height="11.31" viewBox="0 0 12 12" fill="none" stroke="#c9c9c9" stroke-width="1.35" stroke-linejoin="round"><path d="M1.2 10.8l.7-2.9L8.6 1.2a1.1 1.1 0 0 1 1.6 0l.6.6a1.1 1.1 0 0 1 0 1.6L4.1 10.1z M7.4 2.4l2.2 2.2" /></svg>
<div class="t n rr" style="top:493.18px;right:702.27px;color:#444;">15.00</div>
<svg style="left:460.44px;top:493.54px" width="11.31" height="11.31" viewBox="0 0 12 12" fill="none" stroke="#c9c9c9" stroke-width="1.35" stroke-linejoin="round"><path d="M1.2 10.8l.7-2.9L8.6 1.2a1.1 1.1 0 0 1 1.6 0l.6.6a1.1 1.1 0 0 1 0 1.6L4.1 10.1z M7.4 2.4l2.2 2.2" /></svg>
<svg style="left:537.96px;top:493.54px" width="11.31" height="11.31" viewBox="0 0 12 12" fill="none" stroke="#c9c9c9" stroke-width="1.35" stroke-linejoin="round"><path d="M1.2 10.8l.7-2.9L8.6 1.2a1.1 1.1 0 0 1 1.6 0l.6.6a1.1 1.1 0 0 1 0 1.6L4.1 10.1z M7.4 2.4l2.2 2.2" /></svg>
<div class="t n rr" style="top:493.18px;right:547.23px;color:#444;">25.00</div>
<svg style="left:615.48px;top:493.54px" width="11.31" height="11.31" viewBox="0 0 12 12" fill="none" stroke="#c9c9c9" stroke-width="1.35" stroke-linejoin="round"><path d="M1.2 10.8l.7-2.9L8.6 1.2a1.1 1.1 0 0 1 1.6 0l.6.6a1.1 1.1 0 0 1 0 1.6L4.1 10.1z M7.4 2.4l2.2 2.2" /></svg>
<div class="t n rr" style="top:493.18px;right:469.71px;color:#444;">25.00</div>
<svg style="left:693.00px;top:493.54px" width="11.31" height="11.31" viewBox="0 0 12 12" fill="none" stroke="#c9c9c9" stroke-width="1.35" stroke-linejoin="round"><path d="M1.2 10.8l.7-2.9L8.6 1.2a1.1 1.1 0 0 1 1.6 0l.6.6a1.1 1.1 0 0 1 0 1.6L4.1 10.1z M7.4 2.4l2.2 2.2" /></svg>
<svg style="left:770.52px;top:493.54px" width="11.31" height="11.31" viewBox="0 0 12 12" fill="none" stroke="#c9c9c9" stroke-width="1.35" stroke-linejoin="round"><path d="M1.2 10.8l.7-2.9L8.6 1.2a1.1 1.1 0 0 1 1.6 0l.6.6a1.1 1.1 0 0 1 0 1.6L4.1 10.1z M7.4 2.4l2.2 2.2" /></svg>
<svg style="left:848.04px;top:493.54px" width="11.31" height="11.31" viewBox="0 0 12 12" fill="none" stroke="#c9c9c9" stroke-width="1.35" stroke-linejoin="round"><path d="M1.2 10.8l.7-2.9L8.6 1.2a1.1 1.1 0 0 1 1.6 0l.6.6a1.1 1.1 0 0 1 0 1.6L4.1 10.1z M7.4 2.4l2.2 2.2" /></svg>
<svg style="left:925.56px;top:493.54px" width="11.31" height="11.31" viewBox="0 0 12 12" fill="none" stroke="#c9c9c9" stroke-width="1.35" stroke-linejoin="round"><path d="M1.2 10.8l.7-2.9L8.6 1.2a1.1 1.1 0 0 1 1.6 0l.6.6a1.1 1.1 0 0 1 0 1.6L4.1 10.1z M7.4 2.4l2.2 2.2" /></svg>
<svg style="left:1003.08px;top:493.54px" width="11.31" height="11.31" viewBox="0 0 12 12" fill="none" stroke="#c9c9c9" stroke-width="1.35" stroke-linejoin="round"><path d="M1.2 10.8l.7-2.9L8.6 1.2a1.1 1.1 0 0 1 1.6 0l.6.6a1.1 1.1 0 0 1 0 1.6L4.1 10.1z M7.4 2.4l2.2 2.2" /></svg>
<svg style="left:1080.60px;top:493.54px" width="11.31" height="11.31" viewBox="0 0 12 12" fill="none" stroke="#c9c9c9" stroke-width="1.35" stroke-linejoin="round"><path d="M1.2 10.8l.7-2.9L8.6 1.2a1.1 1.1 0 0 1 1.6 0l.6.6a1.1 1.1 0 0 1 0 1.6L4.1 10.1z M7.4 2.4l2.2 2.2" /></svg>
<svg style="left:28.63px;top:516.07px" width="10.29" height="7.71" viewBox="0 0 12 9.4" fill="#0c0c0c"><path d="M0 1.2A1.2 1.2 0 0 1 1.2 0h3l1.4 1.4h5.2A1.2 1.2 0 0 1 12 2.6v5.6a1.2 1.2 0 0 1-1.2 1.2H1.2A1.2 1.2 0 0 1 0 8.2z"/></svg>
<div class="t nm" style="top:513.31px;left:43.03px;color:#444;">Reparatur ...</div>
<div class="abs" style="left:105.26px;top:519.33px;width:7.54px;height:1.54px;background:#222"></div>
<div class="t ty" style="top:513.31px;left:120.00px;color:#444;">Commitment</div>
<svg style="left:196.29px;top:513.67px" width="11.31" height="11.31" viewBox="0 0 12 12" fill="none" stroke="#c9c9c9" stroke-width="1.35" stroke-linejoin="round"><path d="M1.2 10.8l.7-2.9L8.6 1.2a1.1 1.1 0 0 1 1.6 0l.6.6a1.1 1.1 0 0 1 0 1.6L4.1 10.1z M7.4 2.4l2.2 2.2" /></svg>
<div class="t n rr" style="top:513.31px;right:910.97px;color:#444;">40.00</div>
<div class="t n rr" style="top:513.31px;right:857.66px;color:#444;">40.00</div>
<svg style="left:305.40px;top:513.67px" width="11.31" height="11.31" viewBox="0 0 12 12" fill="none" stroke="#c9c9c9" stroke-width="1.35" stroke-linejoin="round"><path d="M1.2 10.8l.7-2.9L8.6 1.2a1.1 1.1 0 0 1 1.6 0l.6.6a1.1 1.1 0 0 1 0 1.6L4.1 10.1z M7.4 2.4l2.2 2.2" /></svg>
<svg style="left:382.92px;top:513.67px" width="11.31" height="11.31" viewBox="0 0 12 12" fill="none" stroke="#c9c9c9" stroke-width="1.35" stroke-linejoin="round"><path d="M1.2 10.8l.7-2.9L8.6 1.2a1.1 1.1 0 0 1 1.6 0l.6.6a1.1 1.1 0 0 1 0 1.6L4.1 10.1z M7.4 2.4l2.2 2.2" /></svg>
<svg style="left:460.44px;top:513.67px" width="11.31" height="11.31" viewBox="0 0 12 12" fill="none" stroke="#c9c9c9" stroke-width="1.35" stroke-linejoin="round"><path d="M1.2 10.8l.7-2.9L8.6 1.2a1.1 1.1 0 0 1 1.6 0l.6.6a1.1 1.1 0 0 1 0 1.6L4.1 10.1z M7.4 2.4l2.2 2.2" /></svg>
<svg style="left:537.96px;top:513.67px" width="11.31" height="11.31" viewBox="0 0 12 12" fill="none" stroke="#c9c9c9" stroke-width="1.35" stroke-linejoin="round"><path d="M1.2 10.8l.7-2.9L8.6 1.2a1.1 1.1 0 0 1 1.6 0l.6.6a1.1 1.1 0 0 1 0 1.6L4.1 10.1z M7.4 2.4l2.2 2.2" /></svg>
<div class="t n rr" style="top:513.31px;right:547.23px;color:#444;">26.67</div>
<svg style="left:615.48px;top:513.67px" width="11.31" height="11.31" viewBox="0 0 12 12" fill="none" stroke="#c9c9c9" stroke-width="1.35" stroke-linejoin="round"><path d="M1.2 10.8l.7-2.9L8.6 1.2a1.1 1.1 0 0 1 1.6 0l.6.6a1.1 1.1 0 0 1 0 1.6L4.1 10.1z M7.4 2.4l2.2 2.2" /></svg>
<div class="t n rr" style="top:513.31px;right:469.71px;color:#444;">13.33</div>
<svg style="left:693.00px;top:513.67px" width="11.31" height="11.31" viewBox="0 0 12 12" fill="none" stroke="#c9c9c9" stroke-width="1.35" stroke-linejoin="round"><path d="M1.2 10.8l.7-2.9L8.6 1.2a1.1 1.1 0 0 1 1.6 0l.6.6a1.1 1.1 0 0 1 0 1.6L4.1 10.1z M7.4 2.4l2.2 2.2" /></svg>
<svg style="left:770.52px;top:513.67px" width="11.31" height="11.31" viewBox="0 0 12 12" fill="none" stroke="#c9c9c9" stroke-width="1.35" stroke-linejoin="round"><path d="M1.2 10.8l.7-2.9L8.6 1.2a1.1 1.1 0 0 1 1.6 0l.6.6a1.1 1.1 0 0 1 0 1.6L4.1 10.1z M7.4 2.4l2.2 2.2" /></svg>
<svg style="left:848.04px;top:513.67px" width="11.31" height="11.31" viewBox="0 0 12 12" fill="none" stroke="#c9c9c9" stroke-width="1.35" stroke-linejoin="round"><path d="M1.2 10.8l.7-2.9L8.6 1.2a1.1 1.1 0 0 1 1.6 0l.6.6a1.1 1.1 0 0 1 0 1.6L4.1 10.1z M7.4 2.4l2.2 2.2" /></svg>
<svg style="left:925.56px;top:513.67px" width="11.31" height="11.31" viewBox="0 0 12 12" fill="none" stroke="#c9c9c9" stroke-width="1.35" stroke-linejoin="round"><path d="M1.2 10.8l.7-2.9L8.6 1.2a1.1 1.1 0 0 1 1.6 0l.6.6a1.1 1.1 0 0 1 0 1.6L4.1 10.1z M7.4 2.4l2.2 2.2" /></svg>
<svg style="left:1003.08px;top:513.67px" width="11.31" height="11.31" viewBox="0 0 12 12" fill="none" stroke="#c9c9c9" stroke-width="1.35" stroke-linejoin="round"><path d="M1.2 10.8l.7-2.9L8.6 1.2a1.1 1.1 0 0 1 1.6 0l.6.6a1.1 1.1 0 0 1 0 1.6L4.1 10.1z M7.4 2.4l2.2 2.2" /></svg>
<svg style="left:1080.60px;top:513.67px" width="11.31" height="11.31" viewBox="0 0 12 12" fill="none" stroke="#c9c9c9" stroke-width="1.35" stroke-linejoin="round"><path d="M1.2 10.8l.7-2.9L8.6 1.2a1.1 1.1 0 0 1 1.6 0l.6.6a1.1 1.1 0 0 1 0 1.6L4.1 10.1z M7.4 2.4l2.2 2.2" /></svg>
<div class="t ty" style="top:533.44px;left:120.00px;color:#444;">Request</div>
<svg style="left:196.29px;top:533.80px" width="11.31" height="11.31" viewBox="0 0 12 12" fill="none" stroke="#c9c9c9" stroke-width="1.35" stroke-linejoin="round"><path d="M1.2 10.8l.7-2.9L8.6 1.2a1.1 1.1 0 0 1 1.6 0l.6.6a1.1 1.1 0 0 1 0 1.6L4.1 10.1z M7.4 2.4l2.2 2.2" /></svg>
<div class="t n rr" style="top:533.44px;right:910.97px;color:#444;">65.00</div>
<div class="t n rr" style="top:533.44px;right:857.66px;color:#444;">65.00</div>
<svg style="left:305.40px;top:533.80px" width="11.31" height="11.31" viewBox="0 0 12 12" fill="none" stroke="#c9c9c9" stroke-width="1.35" stroke-linejoin="round"><path d="M1.2 10.8l.7-2.9L8.6 1.2a1.1 1.1 0 0 1 1.6 0l.6.6a1.1 1.1 0 0 1 0 1.6L4.1 10.1z M7.4 2.4l2.2 2.2" /></svg>
<svg style="left:382.92px;top:533.80px" width="11.31" height="11.31" viewBox="0 0 12 12" fill="none" stroke="#c9c9c9" stroke-width="1.35" stroke-linejoin="round"><path d="M1.2 10.8l.7-2.9L8.6 1.2a1.1 1.1 0 0 1 1.6 0l.6.6a1.1 1.1 0 0 1 0 1.6L4.1 10.1z M7.4 2.4l2.2 2.2" /></svg>
<div class="t n rr" style="top:533.44px;right:702.27px;color:#444;">15.00</div>
<svg style="left:460.44px;top:533.80px" width="11.31" height="11.31" viewBox="0 0 12 12" fill="none" stroke="#c9c9c9" stroke-width="1.35" stroke-linejoin="round"><path d="M1.2 10.8l.7-2.9L8.6 1.2a1.1 1.1 0 0 1 1.6 0l.6.6a1.1 1.1 0 0 1 0 1.6L4.1 10.1z M7.4 2.4l2.2 2.2" /></svg>
<svg style="left:537.96px;top:533.80px" width="11.31" height="11.31" viewBox="0 0 12 12" fill="none" stroke="#c9c9c9" stroke-width="1.35" stroke-linejoin="round"><path d="M1.2 10.8l.7-2.9L8.6 1.2a1.1 1.1 0 0 1 1.6 0l.6.6a1.1 1.1 0 0 1 0 1.6L4.1 10.1z M7.4 2.4l2.2 2.2" /></svg>
<div class="t n rr" style="top:533.44px;right:547.23px;color:#444;">25.00</div>
<svg style="left:615.48px;top:533.80px" width="11.31" height="11.31" viewBox="0 0 12 12" fill="none" stroke="#c9c9c9" stroke-width="1.35" stroke-linejoin="round"><path d="M1.2 10.8l.7-2.9L8.6 1.2a1.1 1.1 0 0 1 1.6 0l.6.6a1.1 1.1 0 0 1 0 1.6L4.1 10.1z M7.4 2.4l2.2 2.2" /></svg>
<div class="t n rr" style="top:533.44px;right:469.71px;color:#444;">25.00</div>
<svg style="left:693.00px;top:533.80px" width="11.31" height="11.31" viewBox="0 0 12 12" fill="none" stroke="#c9c9c9" stroke-width="1.35" stroke-linejoin="round"><path d="M1.2 10.8l.7-2.9L8.6 1.2a1.1 1.1 0 0 1 1.6 0l.6.6a1.1 1.1 0 0 1 0 1.6L4.1 10.1z M7.4 2.4l2.2 2.2" /></svg>
<svg style="left:770.52px;top:533.80px" width="11.31" height="11.31" viewBox="0 0 12 12" fill="none" stroke="#c9c9c9" stroke-width="1.35" stroke-linejoin="round"><path d="M1.2 10.8l.7-2.9L8.6 1.2a1.1 1.1 0 0 1 1.6 0l.6.6a1.1 1.1 0 0 1 0 1.6L4.1 10.1z M7.4 2.4l2.2 2.2" /></svg>
<svg style="left:848.04px;top:533.80px" width="11.31" height="11.31" viewBox="0 0 12 12" fill="none" stroke="#c9c9c9" stroke-width="1.35" stroke-linejoin="round"><path d="M1.2 10.8l.7-2.9L8.6 1.2a1.1 1.1 0 0 1 1.6 0l.6.6a1.1 1.1 0 0 1 0 1.6L4.1 10.1z M7.4 2.4l2.2 2.2" /></svg>
<svg style="left:925.56px;top:533.80px" width="11.31" height="11.31" viewBox="0 0 12 12" fill="none" stroke="#c9c9c9" stroke-width="1.35" stroke-linejoin="round"><path d="M1.2 10.8l.7-2.9L8.6 1.2a1.1 1.1 0 0 1 1.6 0l.6.6a1.1 1.1 0 0 1 0 1.6L4.1 10.1z M7.4 2.4l2.2 2.2" /></svg>
<svg style="left:1003.08px;top:533.80px" width="11.31" height="11.31" viewBox="0 0 12 12" fill="none" stroke="#c9c9c9" stroke-width="1.35" stroke-linejoin="round"><path d="M1.2 10.8l.7-2.9L8.6 1.2a1.1 1.1 0 0 1 1.6 0l.6.6a1.1 1.1 0 0 1 0 1.6L4.1 10.1z M7.4 2.4l2.2 2.2" /></svg>
<svg style="left:1080.60px;top:533.80px" width="11.31" height="11.31" viewBox="0 0 12 12" fill="none" stroke="#c9c9c9" stroke-width="1.35" stroke-linejoin="round"><path d="M1.2 10.8l.7-2.9L8.6 1.2a1.1 1.1 0 0 1 1.6 0l.6.6a1.1 1.1 0 0 1 0 1.6L4.1 10.1z M7.4 2.4l2.2 2.2" /></svg>
<div class="t nm" style="top:553.57px;left:35.66px;color:#444;">RC_00006</div>
<div class="t ty" style="top:553.57px;left:120.00px;color:#444;">Commitment</div>
<svg style="left:196.29px;top:553.93px" width="11.31" height="11.31" viewBox="0 0 12 12" fill="none" stroke="#c9c9c9" stroke-width="1.35" stroke-linejoin="round"><path d="M1.2 10.8l.7-2.9L8.6 1.2a1.1 1.1 0 0 1 1.6 0l.6.6a1.1 1.1 0 0 1 0 1.6L4.1 10.1z M7.4 2.4l2.2 2.2" /></svg>
<div class="t n rr" style="top:553.57px;right:910.97px;color:#444;">40.00</div>
<div class="t n rr" style="top:553.57px;right:857.66px;color:#444;">40.00</div>
<svg style="left:305.40px;top:553.93px" width="11.31" height="11.31" viewBox="0 0 12 12" fill="none" stroke="#c9c9c9" stroke-width="1.35" stroke-linejoin="round"><path d="M1.2 10.8l.7-2.9L8.6 1.2a1.1 1.1 0 0 1 1.6 0l.6.6a1.1 1.1 0 0 1 0 1.6L4.1 10.1z M7.4 2.4l2.2 2.2" /></svg>
<svg style="left:382.92px;top:553.93px" width="11.31" height="11.31" viewBox="0 0 12 12" fill="none" stroke="#c9c9c9" stroke-width="1.35" stroke-linejoin="round"><path d="M1.2 10.8l.7-2.9L8.6 1.2a1.1 1.1 0 0 1 1.6 0l.6.6a1.1 1.1 0 0 1 0 1.6L4.1 10.1z M7.4 2.4l2.2 2.2" /></svg>
<svg style="left:460.44px;top:553.93px" width="11.31" height="11.31" viewBox="0 0 12 12" fill="none" stroke="#c9c9c9" stroke-width="1.35" stroke-linejoin="round"><path d="M1.2 10.8l.7-2.9L8.6 1.2a1.1 1.1 0 0 1 1.6 0l.6.6a1.1 1.1 0 0 1 0 1.6L4.1 10.1z M7.4 2.4l2.2 2.2" /></svg>
<svg style="left:537.96px;top:553.93px" width="11.31" height="11.31" viewBox="0 0 12 12" fill="none" stroke="#c9c9c9" stroke-width="1.35" stroke-linejoin="round"><path d="M1.2 10.8l.7-2.9L8.6 1.2a1.1 1.1 0 0 1 1.6 0l.6.6a1.1 1.1 0 0 1 0 1.6L4.1 10.1z M7.4 2.4l2.2 2.2" /></svg>
<div class="t n rr" style="top:553.57px;right:547.23px;color:#444;">26.67</div>
<svg style="left:615.48px;top:553.93px" width="11.31" height="11.31" viewBox="0 0 12 12" fill="none" stroke="#c9c9c9" stroke-width="1.35" stroke-linejoin="round"><path d="M1.2 10.8l.7-2.9L8.6 1.2a1.1 1.1 0 0 1 1.6 0l.6.6a1.1 1.1 0 0 1 0 1.6L4.1 10.1z M7.4 2.4l2.2 2.2" /></svg>
<div class="t n rr" style="top:553.57px;right:469.71px;color:#444;">13.33</div>
<svg style="left:693.00px;top:553.93px" width="11.31" height="11.31" viewBox="0 0 12 12" fill="none" stroke="#c9c9c9" stroke-width="1.35" stroke-linejoin="round"><path d="M1.2 10.8l.7-2.9L8.6 1.2a1.1 1.1 0 0 1 1.6 0l.6.6a1.1 1.1 0 0 1 0 1.6L4.1 10.1z M7.4 2.4l2.2 2.2" /></svg>
<svg style="left:770.52px;top:553.93px" width="11.31" height="11.31" viewBox="0 0 12 12" fill="none" stroke="#c9c9c9" stroke-width="1.35" stroke-linejoin="round"><path d="M1.2 10.8l.7-2.9L8.6 1.2a1.1 1.1 0 0 1 1.6 0l.6.6a1.1 1.1 0 0 1 0 1.6L4.1 10.1z M7.4 2.4l2.2 2.2" /></svg>
<svg style="left:848.04px;top:553.93px" width="11.31" height="11.31" viewBox="0 0 12 12" fill="none" stroke="#c9c9c9" stroke-width="1.35" stroke-linejoin="round"><path d="M1.2 10.8l.7-2.9L8.6 1.2a1.1 1.1 0 0 1 1.6 0l.6.6a1.1 1.1 0 0 1 0 1.6L4.1 10.1z M7.4 2.4l2.2 2.2" /></svg>
<svg style="left:925.56px;top:553.93px" width="11.31" height="11.31" viewBox="0 0 12 12" fill="none" stroke="#c9c9c9" stroke-width="1.35" stroke-linejoin="round"><path d="M1.2 10.8l.7-2.9L8.6 1.2a1.1 1.1 0 0 1 1.6 0l.6.6a1.1 1.1 0 0 1 0 1.6L4.1 10.1z M7.4 2.4l2.2 2.2" /></svg>
<svg style="left:1003.08px;top:553.93px" width="11.31" height="11.31" viewBox="0 0 12 12" fill="none" stroke="#c9c9c9" stroke-width="1.35" stroke-linejoin="round"><path d="M1.2 10.8l.7-2.9L8.6 1.2a1.1 1.1 0 0 1 1.6 0l.6.6a1.1 1.1 0 0 1 0 1.6L4.1 10.1z M7.4 2.4l2.2 2.2" /></svg>
<svg style="left:1080.60px;top:553.93px" width="11.31" height="11.31" viewBox="0 0 12 12" fill="none" stroke="#c9c9c9" stroke-width="1.35" stroke-linejoin="round"><path d="M1.2 10.8l.7-2.9L8.6 1.2a1.1 1.1 0 0 1 1.6 0l.6.6a1.1 1.1 0 0 1 0 1.6L4.1 10.1z M7.4 2.4l2.2 2.2" /></svg>
<div class="t nm" style="top:573.19px;left:35.66px;color:#444;">RR_00010</div>
<div class="t ty" style="top:573.19px;left:120.00px;color:#444;">Request</div>
<svg style="left:196.29px;top:574.06px" width="11.31" height="11.31" viewBox="0 0 12 12" fill="none" stroke="#c9c9c9" stroke-width="1.35" stroke-linejoin="round"><path d="M1.2 10.8l.7-2.9L8.6 1.2a1.1 1.1 0 0 1 1.6 0l.6.6a1.1 1.1 0 0 1 0 1.6L4.1 10.1z M7.4 2.4l2.2 2.2" /></svg>
<div class="t n rr" style="top:573.19px;right:910.97px;color:#444;">15.00</div>
<div class="t n rr" style="top:573.19px;right:857.66px;color:#444;">15.00</div>
<svg style="left:305.40px;top:574.06px" width="11.31" height="11.31" viewBox="0 0 12 12" fill="none" stroke="#c9c9c9" stroke-width="1.35" stroke-linejoin="round"><path d="M1.2 10.8l.7-2.9L8.6 1.2a1.1 1.1 0 0 1 1.6 0l.6.6a1.1 1.1 0 0 1 0 1.6L4.1 10.1z M7.4 2.4l2.2 2.2" /></svg>
<svg style="left:382.92px;top:574.06px" width="11.31" height="11.31" viewBox="0 0 12 12" fill="none" stroke="#c9c9c9" stroke-width="1.35" stroke-linejoin="round"><path d="M1.2 10.8l.7-2.9L8.6 1.2a1.1 1.1 0 0 1 1.6 0l.6.6a1.1 1.1 0 0 1 0 1.6L4.1 10.1z M7.4 2.4l2.2 2.2" /></svg>
<div class="t n rr" style="top:573.19px;right:702.27px;color:#444;">15.00</div>
<svg style="left:460.44px;top:574.06px" width="11.31" height="11.31" viewBox="0 0 12 12" fill="none" stroke="#c9c9c9" stroke-width="1.35" stroke-linejoin="round"><path d="M1.2 10.8l.7-2.9L8.6 1.2a1.1 1.1 0 0 1 1.6 0l.6.6a1.1 1.1 0 0 1 0 1.6L4.1 10.1z M7.4 2.4l2.2 2.2" /></svg>
<svg style="left:537.96px;top:574.06px" width="11.31" height="11.31" viewBox="0 0 12 12" fill="none" stroke="#c9c9c9" stroke-width="1.35" stroke-linejoin="round"><path d="M1.2 10.8l.7-2.9L8.6 1.2a1.1 1.1 0 0 1 1.6 0l.6.6a1.1 1.1 0 0 1 0 1.6L4.1 10.1z M7.4 2.4l2.2 2.2" /></svg>
<svg style="left:615.48px;top:574.06px" width="11.31" height="11.31" viewBox="0 0 12 12" fill="none" stroke="#c9c9c9" stroke-width="1.35" stroke-linejoin="round"><path d="M1.2 10.8l.7-2.9L8.6 1.2a1.1 1.1 0 0 1 1.6 0l.6.6a1.1 1.1 0 0 1 0 1.6L4.1 10.1z M7.4 2.4l2.2 2.2" /></svg>
<svg style="left:693.00px;top:574.06px" width="11.31" height="11.31" viewBox="0 0 12 12" fill="none" stroke="#c9c9c9" stroke-width="1.35" stroke-linejoin="round"><path d="M1.2 10.8l.7-2.9L8.6 1.2a1.1 1.1 0 0 1 1.6 0l.6.6a1.1 1.1 0 0 1 0 1.6L4.1 10.1z M7.4 2.4l2.2 2.2" /></svg>
<svg style="left:770.52px;top:574.06px" width="11.31" height="11.31" viewBox="0 0 12 12" fill="none" stroke="#c9c9c9" stroke-width="1.35" stroke-linejoin="round"><path d="M1.2 10.8l.7-2.9L8.6 1.2a1.1 1.1 0 0 1 1.6 0l.6.6a1.1 1.1 0 0 1 0 1.6L4.1 10.1z M7.4 2.4l2.2 2.2" /></svg>
<svg style="left:848.04px;top:574.06px" width="11.31" height="11.31" viewBox="0 0 12 12" fill="none" stroke="#c9c9c9" stroke-width="1.35" stroke-linejoin="round"><path d="M1.2 10.8l.7-2.9L8.6 1.2a1.1 1.1 0 0 1 1.6 0l.6.6a1.1 1.1 0 0 1 0 1.6L4.1 10.1z M7.4 2.4l2.2 2.2" /></svg>
<svg style="left:925.56px;top:574.06px" width="11.31" height="11.31" viewBox="0 0 12 12" fill="none" stroke="#c9c9c9" stroke-width="1.35" stroke-linejoin="round"><path d="M1.2 10.8l.7-2.9L8.6 1.2a1.1 1.1 0 0 1 1.6 0l.6.6a1.1 1.1 0 0 1 0 1.6L4.1 10.1z M7.4 2.4l2.2 2.2" /></svg>
<svg style="left:1003.08px;top:574.06px" width="11.31" height="11.31" viewBox="0 0 12 12" fill="none" stroke="#c9c9c9" stroke-width="1.35" stroke-linejoin="round"><path d="M1.2 10.8l.7-2.9L8.6 1.2a1.1 1.1 0 0 1 1.6 0l.6.6a1.1 1.1 0 0 1 0 1.6L4.1 10.1z M7.4 2.4l2.2 2.2" /></svg>
<svg style="left:1080.60px;top:574.06px" width="11.31" height="11.31" viewBox="0 0 12 12" fill="none" stroke="#c9c9c9" stroke-width="1.35" stroke-linejoin="round"><path d="M1.2 10.8l.7-2.9L8.6 1.2a1.1 1.1 0 0 1 1.6 0l.6.6a1.1 1.1 0 0 1 0 1.6L4.1 10.1z M7.4 2.4l2.2 2.2" /></svg>
<div class="t nm" style="top:593.83px;left:35.66px;color:#444;">RR_00020</div>
<div class="t ty" style="top:593.83px;left:120.00px;color:#444;">Request</div>
<svg style="left:196.29px;top:594.19px" width="11.31" height="11.31" viewBox="0 0 12 12" fill="none" stroke="#c9c9c9" stroke-width="1.35" stroke-linejoin="round"><path d="M1.2 10.8l.7-2.9L8.6 1.2a1.1 1.1 0 0 1 1.6 0l.6.6a1.1 1.1 0 0 1 0 1.6L4.1 10.1z M7.4 2.4l2.2 2.2" /></svg>
<div class="t n rr" style="top:593.83px;right:910.97px;color:#444;">50.00</div>
<div class="t n rr" style="top:593.83px;right:857.66px;color:#444;">50.00</div>
<svg style="left:305.40px;top:594.19px" width="11.31" height="11.31" viewBox="0 0 12 12" fill="none" stroke="#c9c9c9" stroke-width="1.35" stroke-linejoin="round"><path d="M1.2 10.8l.7-2.9L8.6 1.2a1.1 1.1 0 0 1 1.6 0l.6.6a1.1 1.1 0 0 1 0 1.6L4.1 10.1z M7.4 2.4l2.2 2.2" /></svg>
<svg style="left:382.92px;top:594.19px" width="11.31" height="11.31" viewBox="0 0 12 12" fill="none" stroke="#c9c9c9" stroke-width="1.35" stroke-linejoin="round"><path d="M1.2 10.8l.7-2.9L8.6 1.2a1.1 1.1 0 0 1 1.6 0l.6.6a1.1 1.1 0 0 1 0 1.6L4.1 10.1z M7.4 2.4l2.2 2.2" /></svg>
<svg style="left:460.44px;top:594.19px" width="11.31" height="11.31" viewBox="0 0 12 12" fill="none" stroke="#c9c9c9" stroke-width="1.35" stroke-linejoin="round"><path d="M1.2 10.8l.7-2.9L8.6 1.2a1.1 1.1 0 0 1 1.6 0l.6.6a1.1 1.1 0 0 1 0 1.6L4.1 10.1z M7.4 2.4l2.2 2.2" /></svg>
<svg style="left:537.96px;top:594.19px" width="11.31" height="11.31" viewBox="0 0 12 12" fill="none" stroke="#c9c9c9" stroke-width="1.35" stroke-linejoin="round"><path d="M1.2 10.8l.7-2.9L8.6 1.2a1.1 1.1 0 0 1 1.6 0l.6.6a1.1 1.1 0 0 1 0 1.6L4.1 10.1z M7.4 2.4l2.2 2.2" /></svg>
<div class="t n rr" style="top:593.83px;right:547.23px;color:#444;">25.00</div>
<svg style="left:615.48px;top:594.19px" width="11.31" height="11.31" viewBox="0 0 12 12" fill="none" stroke="#c9c9c9" stroke-width="1.35" stroke-linejoin="round"><path d="M1.2 10.8l.7-2.9L8.6 1.2a1.1 1.1 0 0 1 1.6 0l.6.6a1.1 1.1 0 0 1 0 1.6L4.1 10.1z M7.4 2.4l2.2 2.2" /></svg>
<div class="t n rr" style="top:593.83px;right:469.71px;color:#444;">25.00</div>
<svg style="left:693.00px;top:594.19px" width="11.31" height="11.31" viewBox="0 0 12 12" fill="none" stroke="#c9c9c9" stroke-width="1.35" stroke-linejoin="round"><path d="M1.2 10.8l.7-2.9L8.6 1.2a1.1 1.1 0 0 1 1.6 0l.6.6a1.1 1.1 0 0 1 0 1.6L4.1 10.1z M7.4 2.4l2.2 2.2" /></svg>
<svg style="left:770.52px;top:594.19px" width="11.31" height="11.31" viewBox="0 0 12 12" fill="none" stroke="#c9c9c9" stroke-width="1.35" stroke-linejoin="round"><path d="M1.2 10.8l.7-2.9L8.6 1.2a1.1 1.1 0 0 1 1.6 0l.6.6a1.1 1.1 0 0 1 0 1.6L4.1 10.1z M7.4 2.4l2.2 2.2" /></svg>
<svg style="left:848.04px;top:594.19px" width="11.31" height="11.31" viewBox="0 0 12 12" fill="none" stroke="#c9c9c9" stroke-width="1.35" stroke-linejoin="round"><path d="M1.2 10.8l.7-2.9L8.6 1.2a1.1 1.1 0 0 1 1.6 0l.6.6a1.1 1.1 0 0 1 0 1.6L4.1 10.1z M7.4 2.4l2.2 2.2" /></svg>
<svg style="left:925.56px;top:594.19px" width="11.31" height="11.31" viewBox="0 0 12 12" fill="none" stroke="#c9c9c9" stroke-width="1.35" stroke-linejoin="round"><path d="M1.2 10.8l.7-2.9L8.6 1.2a1.1 1.1 0 0 1 1.6 0l.6.6a1.1 1.1 0 0 1 0 1.6L4.1 10.1z M7.4 2.4l2.2 2.2" /></svg>
<svg style="left:1003.08px;top:594.19px" width="11.31" height="11.31" viewBox="0 0 12 12" fill="none" stroke="#c9c9c9" stroke-width="1.35" stroke-linejoin="round"><path d="M1.2 10.8l.7-2.9L8.6 1.2a1.1 1.1 0 0 1 1.6 0l.6.6a1.1 1.1 0 0 1 0 1.6L4.1 10.1z M7.4 2.4l2.2 2.2" /></svg>
<svg style="left:1080.60px;top:594.19px" width="11.31" height="11.31" viewBox="0 0 12 12" fill="none" stroke="#c9c9c9" stroke-width="1.35" stroke-linejoin="round"><path d="M1.2 10.8l.7-2.9L8.6 1.2a1.1 1.1 0 0 1 1.6 0l.6.6a1.1 1.1 0 0 1 0 1.6L4.1 10.1z M7.4 2.4l2.2 2.2" /></svg>
<svg style="left:9.60px;top:616.03px" width="10.11" height="8.91" viewBox="0 0 12 10" fill="none" stroke="#222" stroke-width="1.5"><path d="M4.4 1.4h7.4M4.4 5h7.4M4.4 8.6h7.4"/><path d="M.4 1.4h2.6M.4 5h2.6M.4 8.6h2.6" stroke="#444" stroke-dasharray="1.1 .4"/></svg>
<div class="t b" style="top:613.96px;left:23.31px;">Erstellung eine...</div>
<div class="abs" style="left:105.26px;top:619.98px;width:7.54px;height:1.54px;background:#222"></div>
<div class="t ty b" style="top:613.96px;left:120.00px;">Commitment</div>
<svg style="left:196.29px;top:614.32px" width="11.31" height="11.31" viewBox="0 0 12 12" fill="none" stroke="#c9c9c9" stroke-width="1.35" stroke-linejoin="round"><path d="M1.2 10.8l.7-2.9L8.6 1.2a1.1 1.1 0 0 1 1.6 0l.6.6a1.1 1.1 0 0 1 0 1.6L4.1 10.1z M7.4 2.4l2.2 2.2" /></svg>
<div class="t b n rr" style="top:613.96px;right:910.97px;">10.00</div>
<div class="t b n rr" style="top:613.96px;right:857.66px;">10.00</div>
<svg style="left:305.40px;top:614.32px" width="11.31" height="11.31" viewBox="0 0 12 12" fill="none" stroke="#c9c9c9" stroke-width="1.35" stroke-linejoin="round"><path d="M1.2 10.8l.7-2.9L8.6 1.2a1.1 1.1 0 0 1 1.6 0l.6.6a1.1 1.1 0 0 1 0 1.6L4.1 10.1z M7.4 2.4l2.2 2.2" /></svg>
<svg style="left:382.92px;top:614.32px" width="11.31" height="11.31" viewBox="0 0 12 12" fill="none" stroke="#c9c9c9" stroke-width="1.35" stroke-linejoin="round"><path d="M1.2 10.8l.7-2.9L8.6 1.2a1.1 1.1 0 0 1 1.6 0l.6.6a1.1 1.1 0 0 1 0 1.6L4.1 10.1z M7.4 2.4l2.2 2.2" /></svg>
<svg style="left:460.44px;top:614.32px" width="11.31" height="11.31" viewBox="0 0 12 12" fill="none" stroke="#c9c9c9" stroke-width="1.35" stroke-linejoin="round"><path d="M1.2 10.8l.7-2.9L8.6 1.2a1.1 1.1 0 0 1 1.6 0l.6.6a1.1 1.1 0 0 1 0 1.6L4.1 10.1z M7.4 2.4l2.2 2.2" /></svg>
<svg style="left:537.96px;top:614.32px" width="11.31" height="11.31" viewBox="0 0 12 12" fill="none" stroke="#c9c9c9" stroke-width="1.35" stroke-linejoin="round"><path d="M1.2 10.8l.7-2.9L8.6 1.2a1.1 1.1 0 0 1 1.6 0l.6.6a1.1 1.1 0 0 1 0 1.6L4.1 10.1z M7.4 2.4l2.2 2.2" /></svg>
<svg style="left:615.48px;top:614.32px" width="11.31" height="11.31" viewBox="0 0 12 12" fill="none" stroke="#c9c9c9" stroke-width="1.35" stroke-linejoin="round"><path d="M1.2 10.8l.7-2.9L8.6 1.2a1.1 1.1 0 0 1 1.6 0l.6.6a1.1 1.1 0 0 1 0 1.6L4.1 10.1z M7.4 2.4l2.2 2.2" /></svg>
<div class="t b n rr" style="top:613.96px;right:469.71px;">6.00</div>
<svg style="left:693.00px;top:614.32px" width="11.31" height="11.31" viewBox="0 0 12 12" fill="none" stroke="#c9c9c9" stroke-width="1.35" stroke-linejoin="round"><path d="M1.2 10.8l.7-2.9L8.6 1.2a1.1 1.1 0 0 1 1.6 0l.6.6a1.1 1.1 0 0 1 0 1.6L4.1 10.1z M7.4 2.4l2.2 2.2" /></svg>
<div class="t b n rr" style="top:613.96px;right:392.19px;">4.00</div>
<svg style="left:770.52px;top:614.32px" width="11.31" height="11.31" viewBox="0 0 12 12" fill="none" stroke="#c9c9c9" stroke-width="1.35" stroke-linejoin="round"><path d="M1.2 10.8l.7-2.9L8.6 1.2a1.1 1.1 0 0 1 1.6 0l.6.6a1.1 1.1 0 0 1 0 1.6L4.1 10.1z M7.4 2.4l2.2 2.2" /></svg>
<svg style="left:848.04px;top:614.32px" width="11.31" height="11.31" viewBox="0 0 12 12" fill="none" stroke="#c9c9c9" stroke-width="1.35" stroke-linejoin="round"><path d="M1.2 10.8l.7-2.9L8.6 1.2a1.1 1.1 0 0 1 1.6 0l.6.6a1.1 1.1 0 0 1 0 1.6L4.1 10.1z M7.4 2.4l2.2 2.2" /></svg>
<svg style="left:925.56px;top:614.32px" width="11.31" height="11.31" viewBox="0 0 12 12" fill="none" stroke="#c9c9c9" stroke-width="1.35" stroke-linejoin="round"><path d="M1.2 10.8l.7-2.9L8.6 1.2a1.1 1.1 0 0 1 1.6 0l.6.6a1.1 1.1 0 0 1 0 1.6L4.1 10.1z M7.4 2.4l2.2 2.2" /></svg>
<svg style="left:1003.08px;top:614.32px" width="11.31" height="11.31" viewBox="0 0 12 12" fill="none" stroke="#c9c9c9" stroke-width="1.35" stroke-linejoin="round"><path d="M1.2 10.8l.7-2.9L8.6 1.2a1.1 1.1 0 0 1 1.6 0l.6.6a1.1 1.1 0 0 1 0 1.6L4.1 10.1z M7.4 2.4l2.2 2.2" /></svg>
<svg style="left:1080.60px;top:614.32px" width="11.31" height="11.31" viewBox="0 0 12 12" fill="none" stroke="#c9c9c9" stroke-width="1.35" stroke-linejoin="round"><path d="M1.2 10.8l.7-2.9L8.6 1.2a1.1 1.1 0 0 1 1.6 0l.6.6a1.1 1.1 0 0 1 0 1.6L4.1 10.1z M7.4 2.4l2.2 2.2" /></svg>
<div class="t ty b" style="top:634.09px;left:120.00px;">Request</div>
<svg style="left:196.29px;top:634.45px" width="11.31" height="11.31" viewBox="0 0 12 12" fill="none" stroke="#c9c9c9" stroke-width="1.35" stroke-linejoin="round"><path d="M1.2 10.8l.7-2.9L8.6 1.2a1.1 1.1 0 0 1 1.6 0l.6.6a1.1 1.1 0 0 1 0 1.6L4.1 10.1z M7.4 2.4l2.2 2.2" /></svg>
<div class="t b n rr" style="top:634.09px;right:910.97px;">10.00</div>
<div class="t b n rr" style="top:634.09px;right:857.66px;">10.00</div>
<svg style="left:305.40px;top:634.45px" width="11.31" height="11.31" viewBox="0 0 12 12" fill="none" stroke="#c9c9c9" stroke-width="1.35" stroke-linejoin="round"><path d="M1.2 10.8l.7-2.9L8.6 1.2a1.1 1.1 0 0 1 1.6 0l.6.6a1.1 1.1 0 0 1 0 1.6L4.1 10.1z M7.4 2.4l2.2 2.2" /></svg>
<svg style="left:382.92px;top:634.45px" width="11.31" height="11.31" viewBox="0 0 12 12" fill="none" stroke="#c9c9c9" stroke-width="1.35" stroke-linejoin="round"><path d="M1.2 10.8l.7-2.9L8.6 1.2a1.1 1.1 0 0 1 1.6 0l.6.6a1.1 1.1 0 0 1 0 1.6L4.1 10.1z M7.4 2.4l2.2 2.2" /></svg>
<svg style="left:460.44px;top:634.45px" width="11.31" height="11.31" viewBox="0 0 12 12" fill="none" stroke="#c9c9c9" stroke-width="1.35" stroke-linejoin="round"><path d="M1.2 10.8l.7-2.9L8.6 1.2a1.1 1.1 0 0 1 1.6 0l.6.6a1.1 1.1 0 0 1 0 1.6L4.1 10.1z M7.4 2.4l2.2 2.2" /></svg>
<svg style="left:537.96px;top:634.45px" width="11.31" height="11.31" viewBox="0 0 12 12" fill="none" stroke="#c9c9c9" stroke-width="1.35" stroke-linejoin="round"><path d="M1.2 10.8l.7-2.9L8.6 1.2a1.1 1.1 0 0 1 1.6 0l.6.6a1.1 1.1 0 0 1 0 1.6L4.1 10.1z M7.4 2.4l2.2 2.2" /></svg>
<svg style="left:615.48px;top:634.45px" width="11.31" height="11.31" viewBox="0 0 12 12" fill="none" stroke="#c9c9c9" stroke-width="1.35" stroke-linejoin="round"><path d="M1.2 10.8l.7-2.9L8.6 1.2a1.1 1.1 0 0 1 1.6 0l.6.6a1.1 1.1 0 0 1 0 1.6L4.1 10.1z M7.4 2.4l2.2 2.2" /></svg>
<div class="t b n rr" style="top:634.09px;right:469.71px;">6.00</div>
<svg style="left:693.00px;top:634.45px" width="11.31" height="11.31" viewBox="0 0 12 12" fill="none" stroke="#c9c9c9" stroke-width="1.35" stroke-linejoin="round"><path d="M1.2 10.8l.7-2.9L8.6 1.2a1.1 1.1 0 0 1 1.6 0l.6.6a1.1 1.1 0 0 1 0 1.6L4.1 10.1z M7.4 2.4l2.2 2.2" /></svg>
<div class="t b n rr" style="top:634.09px;right:392.19px;">4.00</div>
<svg style="left:770.52px;top:634.45px" width="11.31" height="11.31" viewBox="0 0 12 12" fill="none" stroke="#c9c9c9" stroke-width="1.35" stroke-linejoin="round"><path d="M1.2 10.8l.7-2.9L8.6 1.2a1.1 1.1 0 0 1 1.6 0l.6.6a1.1 1.1 0 0 1 0 1.6L4.1 10.1z M7.4 2.4l2.2 2.2" /></svg>
<svg style="left:848.04px;top:634.45px" width="11.31" height="11.31" viewBox="0 0 12 12" fill="none" stroke="#c9c9c9" stroke-width="1.35" stroke-linejoin="round"><path d="M1.2 10.8l.7-2.9L8.6 1.2a1.1 1.1 0 0 1 1.6 0l.6.6a1.1 1.1 0 0 1 0 1.6L4.1 10.1z M7.4 2.4l2.2 2.2" /></svg>
<svg style="left:925.56px;top:634.45px" width="11.31" height="11.31" viewBox="0 0 12 12" fill="none" stroke="#c9c9c9" stroke-width="1.35" stroke-linejoin="round"><path d="M1.2 10.8l.7-2.9L8.6 1.2a1.1 1.1 0 0 1 1.6 0l.6.6a1.1 1.1 0 0 1 0 1.6L4.1 10.1z M7.4 2.4l2.2 2.2" /></svg>
<svg style="left:1003.08px;top:634.45px" width="11.31" height="11.31" viewBox="0 0 12 12" fill="none" stroke="#c9c9c9" stroke-width="1.35" stroke-linejoin="round"><path d="M1.2 10.8l.7-2.9L8.6 1.2a1.1 1.1 0 0 1 1.6 0l.6.6a1.1 1.1 0 0 1 0 1.6L4.1 10.1z M7.4 2.4l2.2 2.2" /></svg>
<svg style="left:1080.60px;top:634.45px" width="11.31" height="11.31" viewBox="0 0 12 12" fill="none" stroke="#c9c9c9" stroke-width="1.35" stroke-linejoin="round"><path d="M1.2 10.8l.7-2.9L8.6 1.2a1.1 1.1 0 0 1 1.6 0l.6.6a1.1 1.1 0 0 1 0 1.6L4.1 10.1z M7.4 2.4l2.2 2.2" /></svg>
<svg style="left:21.60px;top:656.38px" width="9.60" height="8.91" viewBox="0 0 10.8 10" fill="#ece8ee" stroke="#3a3a3a" stroke-width="1.15"><rect x=".7" y=".7" width="9.4" height="8.6" rx="1.2"/><path d="M.7 4.2h9.4M5.4 .7v3.5" stroke-width=".9"/><rect x="1.6" y="1.6" width="3.2" height="2.2" fill="#222" stroke="none"/><rect x="2.2" y="5.6" width="3.2" height="2.2" fill="#777" stroke="none"/></svg>
<div class="t nm" style="top:654.22px;left:35.14px;color:#444;">Schedule SP...</div>
<div class="abs" style="left:105.26px;top:660.23px;width:7.54px;height:1.54px;background:#222"></div>
<div class="t ty" style="top:654.22px;left:120.00px;color:#444;">Commitment</div>
<svg style="left:196.29px;top:654.58px" width="11.31" height="11.31" viewBox="0 0 12 12" fill="none" stroke="#c9c9c9" stroke-width="1.35" stroke-linejoin="round"><path d="M1.2 10.8l.7-2.9L8.6 1.2a1.1 1.1 0 0 1 1.6 0l.6.6a1.1 1.1 0 0 1 0 1.6L4.1 10.1z M7.4 2.4l2.2 2.2" /></svg>
<div class="t n rr" style="top:654.22px;right:910.97px;color:#444;">10.00</div>
<div class="t n rr" style="top:654.22px;right:857.66px;color:#444;">10.00</div>
<svg style="left:305.40px;top:654.58px" width="11.31" height="11.31" viewBox="0 0 12 12" fill="none" stroke="#c9c9c9" stroke-width="1.35" stroke-linejoin="round"><path d="M1.2 10.8l.7-2.9L8.6 1.2a1.1 1.1 0 0 1 1.6 0l.6.6a1.1 1.1 0 0 1 0 1.6L4.1 10.1z M7.4 2.4l2.2 2.2" /></svg>
<svg style="left:382.92px;top:654.58px" width="11.31" height="11.31" viewBox="0 0 12 12" fill="none" stroke="#c9c9c9" stroke-width="1.35" stroke-linejoin="round"><path d="M1.2 10.8l.7-2.9L8.6 1.2a1.1 1.1 0 0 1 1.6 0l.6.6a1.1 1.1 0 0 1 0 1.6L4.1 10.1z M7.4 2.4l2.2 2.2" /></svg>
<svg style="left:460.44px;top:654.58px" width="11.31" height="11.31" viewBox="0 0 12 12" fill="none" stroke="#c9c9c9" stroke-width="1.35" stroke-linejoin="round"><path d="M1.2 10.8l.7-2.9L8.6 1.2a1.1 1.1 0 0 1 1.6 0l.6.6a1.1 1.1 0 0 1 0 1.6L4.1 10.1z M7.4 2.4l2.2 2.2" /></svg>
<svg style="left:537.96px;top:654.58px" width="11.31" height="11.31" viewBox="0 0 12 12" fill="none" stroke="#c9c9c9" stroke-width="1.35" stroke-linejoin="round"><path d="M1.2 10.8l.7-2.9L8.6 1.2a1.1 1.1 0 0 1 1.6 0l.6.6a1.1 1.1 0 0 1 0 1.6L4.1 10.1z M7.4 2.4l2.2 2.2" /></svg>
<svg style="left:615.48px;top:654.58px" width="11.31" height="11.31" viewBox="0 0 12 12" fill="none" stroke="#c9c9c9" stroke-width="1.35" stroke-linejoin="round"><path d="M1.2 10.8l.7-2.9L8.6 1.2a1.1 1.1 0 0 1 1.6 0l.6.6a1.1 1.1 0 0 1 0 1.6L4.1 10.1z M7.4 2.4l2.2 2.2" /></svg>
<div class="t n rr" style="top:654.22px;right:469.71px;color:#444;">6.00</div>
<svg style="left:693.00px;top:654.58px" width="11.31" height="11.31" viewBox="0 0 12 12" fill="none" stroke="#c9c9c9" stroke-width="1.35" stroke-linejoin="round"><path d="M1.2 10.8l.7-2.9L8.6 1.2a1.1 1.1 0 0 1 1.6 0l.6.6a1.1 1.1 0 0 1 0 1.6L4.1 10.1z M7.4 2.4l2.2 2.2" /></svg>
<div class="t n rr" style="top:654.22px;right:392.19px;color:#444;">4.00</div>
<svg style="left:770.52px;top:654.58px" width="11.31" height="11.31" viewBox="0 0 12 12" fill="none" stroke="#c9c9c9" stroke-width="1.35" stroke-linejoin="round"><path d="M1.2 10.8l.7-2.9L8.6 1.2a1.1 1.1 0 0 1 1.6 0l.6.6a1.1 1.1 0 0 1 0 1.6L4.1 10.1z M7.4 2.4l2.2 2.2" /></svg>
<svg style="left:848.04px;top:654.58px" width="11.31" height="11.31" viewBox="0 0 12 12" fill="none" stroke="#c9c9c9" stroke-width="1.35" stroke-linejoin="round"><path d="M1.2 10.8l.7-2.9L8.6 1.2a1.1 1.1 0 0 1 1.6 0l.6.6a1.1 1.1 0 0 1 0 1.6L4.1 10.1z M7.4 2.4l2.2 2.2" /></svg>
<svg style="left:925.56px;top:654.58px" width="11.31" height="11.31" viewBox="0 0 12 12" fill="none" stroke="#c9c9c9" stroke-width="1.35" stroke-linejoin="round"><path d="M1.2 10.8l.7-2.9L8.6 1.2a1.1 1.1 0 0 1 1.6 0l.6.6a1.1 1.1 0 0 1 0 1.6L4.1 10.1z M7.4 2.4l2.2 2.2" /></svg>
<svg style="left:1003.08px;top:654.58px" width="11.31" height="11.31" viewBox="0 0 12 12" fill="none" stroke="#c9c9c9" stroke-width="1.35" stroke-linejoin="round"><path d="M1.2 10.8l.7-2.9L8.6 1.2a1.1 1.1 0 0 1 1.6 0l.6.6a1.1 1.1 0 0 1 0 1.6L4.1 10.1z M7.4 2.4l2.2 2.2" /></svg>
<svg style="left:1080.60px;top:654.58px" width="11.31" height="11.31" viewBox="0 0 12 12" fill="none" stroke="#c9c9c9" stroke-width="1.35" stroke-linejoin="round"><path d="M1.2 10.8l.7-2.9L8.6 1.2a1.1 1.1 0 0 1 1.6 0l.6.6a1.1 1.1 0 0 1 0 1.6L4.1 10.1z M7.4 2.4l2.2 2.2" /></svg>
<div class="abs" style="left:300.69px;top:0;width:1.71px;height:663.09px;background:#666"></div>
<div class="abs" style="left:1075.89px;top:0;width:1.71px;height:32.06px;background:#666"></div>
<div class="abs" style="left:1075.89px;top:187.54px;width:1.71px;height:475.54px;background:#666"></div>
<div class="abs" style="left:1152.86px;top:228.00px;width:2.40px;height:41.31px;background:#c9c9c9"></div>
</div>
</div></body></html>
